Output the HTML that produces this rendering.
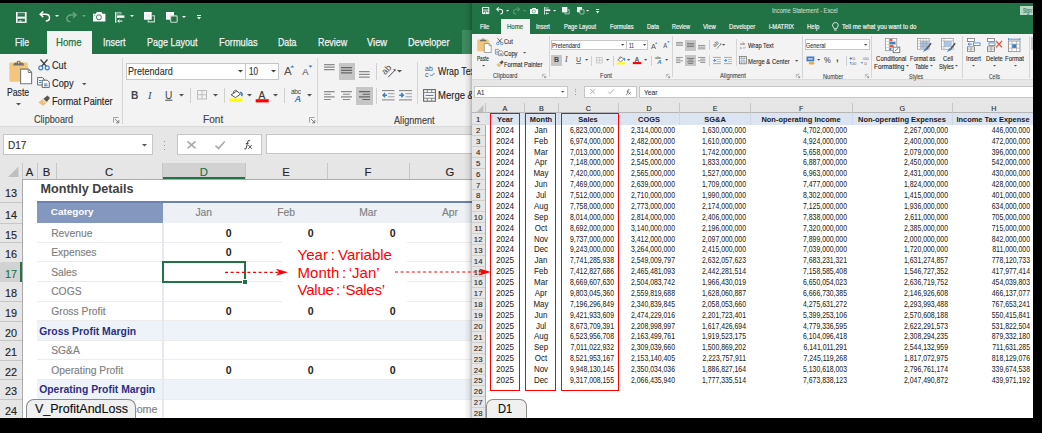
<!DOCTYPE html><html><head><meta charset="utf-8"><style>
*{margin:0;padding:0;box-sizing:border-box}
html,body{width:1042px;height:433px;overflow:hidden;background:#000}
body{position:relative;font-family:"Liberation Sans",sans-serif}
.a{position:absolute}
.t{position:absolute;white-space:nowrap;line-height:20px;height:20px}
svg{position:absolute;overflow:visible}
</style></head><body>
<div class="a" style="left:0px;top:3px;width:472px;height:51px;background:#217346;"></div>
<div class="a" style="left:0px;top:54px;width:472px;height:72px;background:#F3F3F3;"></div>
<div class="a" style="left:0px;top:126px;width:472px;height:1px;background:#DADADA;"></div>
<div class="a" style="left:0px;top:127px;width:472px;height:52px;background:#E6E6E6;"></div>
<svg style="left:16.4px;top:11.7px" width="10.60" height="10.90" viewBox="0 0 10.6 10.9" preserveAspectRatio="none"><rect x="0" y="0" width="1.6" height="10.9" fill="#fff"/><rect x="8.9" y="0" width="1.7" height="10.9" fill="#fff"/><rect x="1.6" y="0" width="7.3" height="1.2" fill="#fff" opacity="0.6"/><rect x="1.6" y="2.6" width="7.3" height="0.5" fill="#fff" opacity="0.25"/><rect x="1.6" y="4.6" width="7.3" height="2.1" fill="#fff"/><rect x="1.6" y="9.6" width="7.3" height="1.3" fill="#fff"/><rect x="3.5" y="8.3" width="1.9" height="1.3" fill="#fff"/></svg>
<svg style="left:38.9px;top:11.4px" width="11.50" height="10.50" viewBox="0 0 11.5 10.5" preserveAspectRatio="none"><path d="M1.5,3.3 H6.5 C9,3.3 10.5,5 10.5,6.8 C10.5,8.6 9,10 6.8,10" fill="none" stroke="#fff" stroke-width="1.5"/><path d="M4.3,0.5 L1.2,3.3 L4.3,6.1" fill="none" stroke="#fff" stroke-width="1.5"/></svg>
<svg style="left:54.6px;top:15.399999999999999px;" width="4" height="2.0" viewBox="0 0 4 2.0"><polygon points="0,0 4,0 2.0,2.0" fill="#fff"/></svg>
<svg style="left:66.1px;top:11.6px" width="11.30" height="10.10" viewBox="0 0 11.3 10.1" preserveAspectRatio="none"><path d="M9.8,3.1 H4.8 C2.3,3.1 0.8,4.8 0.8,6.6 C0.8,8.4 2.3,9.7 4.5,9.7" fill="none" stroke="#6AA583" stroke-width="1.5"/><path d="M7,0.4 L10.1,3.1 L7,5.8" fill="none" stroke="#6AA583" stroke-width="1.5"/></svg>
<svg style="left:81.8px;top:15.3px;" width="4" height="2.0" viewBox="0 0 4 2.0"><polygon points="0,0 4,0 2.0,2.0" fill="#6AA583"/></svg>
<svg style="left:93px;top:12.3px" width="12.40" height="9.40" viewBox="0 0 12.4 9.4" preserveAspectRatio="none"><path d="M0,1.7 H3 L3.8,0 H8.6 L9.4,1.7 H12.4 V9.4 H0 Z" fill="#fff"/><circle cx="5.9" cy="5.3" r="2.5" fill="none" stroke="#217346" stroke-width="0.9"/><circle cx="1.6" cy="3.2" r="0.45" fill="#217346"/></svg>
<svg style="left:115px;top:11.6px" width="9.40" height="10.80" viewBox="0 0 9.4 10.8" preserveAspectRatio="none"><rect x="0" y="0" width="1.4" height="10.8" fill="#fff" opacity="0.8"/><rect x="1.9" y="0.4" width="4.5" height="1.6" rx="0.6" fill="none" stroke="#fff" stroke-width="0.7" opacity="0.8"/><rect x="2" y="3.4" width="7.4" height="2.4" fill="#fff"/><path d="M7.5,9.1 H2.8 M4.5,7.6 L2.8,9.1 L4.5,10.6" fill="none" stroke="#fff" stroke-width="1"/></svg>
<svg style="left:130.3px;top:15.3px;" width="4" height="2.0" viewBox="0 0 4 2.0"><polygon points="0,0 4,0 2.0,2.0" fill="#fff"/></svg>
<svg style="left:143.8px;top:11.8px" width="11.10" height="10.60" viewBox="0 0 11.1 10.6" preserveAspectRatio="none"><rect x="0.7" y="0.7" width="6.3" height="6.3" fill="#EEEEEE" stroke="#fff" stroke-width="1.4"/><path d="M8.2,3.8 H10.4 V9.9 H4.2 V7.9" fill="none" stroke="#C9DCCF" stroke-width="1.1"/></svg>
<svg style="left:166.2px;top:11.8px" width="11.80" height="10.80" viewBox="0 0 11.8 10.8" preserveAspectRatio="none"><rect x="0" y="0" width="8" height="7.7" fill="#fff"/><rect x="1.3" y="1.3" width="5" height="5" fill="#F3F3F3"/><rect x="4.6" y="3.9" width="6.6" height="6.3" rx="1" fill="#217346" stroke="#C9DCCF" stroke-width="1.1"/></svg>
<svg style="left:182.0px;top:15.5px;" width="4" height="2.0" viewBox="0 0 4 2.0"><polygon points="0,0 4,0 2.0,2.0" fill="#fff"/></svg>
<svg style="left:197px;top:15px" width="4.00" height="4.50" viewBox="0 0 4 4.3" preserveAspectRatio="none"><rect x="0" y="0" width="4" height="0.9" fill="#fff"/><polygon points="0,1.9 4,1.9 2,4.3" fill="#fff"/></svg>
<div class="a" style="left:47px;top:30.6px;width:45.3px;height:23.4px;background:#F3F3F3;"></div>
<div class="a" style="left:462.3px;top:30px;width:9.7px;height:24px;background:#3E8A5F;"></div>
<div class="t" style="left:14.5px;top:32.30px;font-size:11.2px;color:#F2F2F2;font-weight:400;transform:scaleX(0.7813);transform-origin:left center;-webkit-text-stroke:0.25px #F2F2F2;">File</div>
<div class="t" style="left:55.9px;top:32.30px;font-size:11.2px;color:#217346;font-weight:400;transform:scaleX(0.8569);transform-origin:left center;-webkit-text-stroke:0.25px #217346;">Home</div>
<div class="t" style="left:102.5px;top:32.30px;font-size:11.2px;color:#F2F2F2;font-weight:400;transform:scaleX(0.8033);transform-origin:left center;-webkit-text-stroke:0.25px #F2F2F2;">Insert</div>
<div class="t" style="left:146.5px;top:32.30px;font-size:11.2px;color:#F2F2F2;font-weight:400;transform:scaleX(0.803);transform-origin:left center;-webkit-text-stroke:0.25px #F2F2F2;">Page Layout</div>
<div class="t" style="left:218.5px;top:32.30px;font-size:11.2px;color:#F2F2F2;font-weight:400;transform:scaleX(0.827);transform-origin:left center;-webkit-text-stroke:0.25px #F2F2F2;">Formulas</div>
<div class="t" style="left:278.0px;top:32.30px;font-size:11.2px;color:#F2F2F2;font-weight:400;transform:scaleX(0.782);transform-origin:left center;-webkit-text-stroke:0.25px #F2F2F2;">Data</div>
<div class="t" style="left:317.5px;top:32.30px;font-size:11.2px;color:#F2F2F2;font-weight:400;transform:scaleX(0.7952);transform-origin:left center;-webkit-text-stroke:0.25px #F2F2F2;">Review</div>
<div class="t" style="left:367.2px;top:32.30px;font-size:11.2px;color:#F2F2F2;font-weight:400;transform:scaleX(0.835);transform-origin:left center;-webkit-text-stroke:0.25px #F2F2F2;">View</div>
<div class="t" style="left:408.3px;top:32.30px;font-size:11.2px;color:#F2F2F2;font-weight:400;transform:scaleX(0.813);transform-origin:left center;-webkit-text-stroke:0.25px #F2F2F2;">Developer</div>
<svg style="left:9px;top:60px" width="24.00" height="25.00" viewBox="0 0 24 25" preserveAspectRatio="none"><rect x="0.4" y="2.6" width="18.3" height="19.1" rx="1.2" fill="#F0C77C"/><path d="M4.2,5.4 L5.2,2.8 H7.6 C7.6,0.2 11.8,0.2 11.8,2.8 H14.2 L15.2,5.4 Z" fill="#707070"/><circle cx="9.7" cy="2.5" r="0.9" fill="#F0C77C"/><path d="M11.6,9.1 H19.4 L22.6,12.3 V23.8 H11.6 Z" fill="#fff" stroke="#7A7A7A" stroke-width="1.1"/><path d="M19.2,9.1 V12.5 H22.6" fill="none" stroke="#7A7A7A" stroke-width="1"/></svg>
<div class="t" style="left:7.3px;top:83.10px;font-size:10.2px;color:#262626;font-weight:400;transform:scaleX(0.8512);transform-origin:left center;-webkit-text-stroke:0.139px #262626;">Paste</div>
<svg style="left:16.0px;top:102.95px;" width="5" height="2.5" viewBox="0 0 5 2.5"><polygon points="0,0 5,0 2.5,2.5" fill="#555"/></svg>
<svg style="left:38px;top:59.3px" width="12.00" height="11.50" viewBox="0 0 12 11.5" preserveAspectRatio="none"><path d="M2.5,0.5 L8.5,7.5 M9.5,0.5 L3.5,7.5" stroke="#444" stroke-width="1.3"/><circle cx="2.8" cy="8.8" r="2" fill="none" stroke="#3C7FC4" stroke-width="1.2"/><circle cx="9.2" cy="8.8" r="2" fill="none" stroke="#3C7FC4" stroke-width="1.2"/></svg>
<div class="t" style="left:52.2px;top:56.30px;font-size:10.4px;color:#262626;font-weight:400;transform:scaleX(0.8774);transform-origin:left center;-webkit-text-stroke:0.142px #262626;">Cut</div>
<svg style="left:37px;top:77.3px" width="13.00" height="11.00" viewBox="0 0 13 11" preserveAspectRatio="none"><path d="M0.6,0.6 H5.5 L7,2 V8 H0.6 Z" fill="#fff" stroke="#666" stroke-width="1"/><path d="M5.2,3.2 H10.3 L12.3,5.2 V10.4 H5.2 Z" fill="#fff" stroke="#666" stroke-width="1"/><rect x="2" y="3" width="2.5" height="1" fill="#3C7FC4"/><rect x="2" y="5" width="2.5" height="1" fill="#3C7FC4"/><rect x="7" y="6.5" width="3.5" height="1" fill="#3C7FC4"/><rect x="7" y="8.2" width="3.5" height="1" fill="#3C7FC4"/></svg>
<div class="t" style="left:52.2px;top:74.10px;font-size:10.4px;color:#262626;font-weight:400;transform:scaleX(0.8897);transform-origin:left center;-webkit-text-stroke:0.142px #262626;">Copy</div>
<svg style="left:81.75px;top:82.875px;" width="4.5" height="2.25" viewBox="0 0 4.5 2.25"><polygon points="0,0 4.5,0 2.25,2.25" fill="#555"/></svg>
<svg style="left:38px;top:95px" width="12.50" height="11.50" viewBox="0 0 12.5 11.5" preserveAspectRatio="none"><path d="M0.5,7.5 L5,3.5 L9,7.5 L5,11 Z" fill="#EBC17F"/><path d="M5.5,3.8 L9.5,0.5 L12,3 L8.8,7" fill="#555"/><path d="M4.5,4.3 L8.6,8.1" stroke="#fff" stroke-width="0.8"/></svg>
<div class="t" style="left:52.2px;top:92.10px;font-size:10.4px;color:#262626;font-weight:400;transform:scaleX(0.8812);transform-origin:left center;-webkit-text-stroke:0.142px #262626;">Format Painter</div>
<div class="t" style="left:34.3px;top:110.40px;font-size:10.4px;color:#444444;font-weight:400;transform:scaleX(0.8784);transform-origin:left center;-webkit-text-stroke:0.142px #444444;">Clipboard</div>
<svg style="left:113px;top:117px" width="6.50" height="6.50" viewBox="0 0 6.5 6.5" preserveAspectRatio="none"><path d="M0.5,5.5 V0.5 H5.5" fill="none" stroke="#999" stroke-width="0.9"/><path d="M2,2 L5.8,5.8 M3,5.8 H5.8 V3" fill="none" stroke="#777" stroke-width="0.9"/></svg>
<div class="a" style="left:122.3px;top:58px;width:1px;height:66px;background:#D5D5D5;"></div>
<div class="a" style="left:125.8px;top:62.6px;width:119.9px;height:17.7px;background:#fff;border:1px solid #C6C6C6;"></div>
<div class="a" style="left:245.2px;top:62.6px;width:34.2px;height:17.7px;background:#fff;border:1px solid #C6C6C6;"></div>
<div class="t" style="left:128.1px;top:62.30px;font-size:10px;color:#333;font-weight:400;transform:scaleX(0.9035);transform-origin:left center;-webkit-text-stroke:0.136px #333;">Pretendard</div>
<svg style="left:237.7px;top:70.05px;" width="5" height="2.5" viewBox="0 0 5 2.5"><polygon points="0,0 5,0 2.5,2.5" fill="#444"/></svg>
<div class="t" style="left:248.5px;top:62.40px;font-size:10.2px;color:#333;font-weight:400;transform:scaleX(0.7933);transform-origin:left center;-webkit-text-stroke:0.139px #333;">10</div>
<svg style="left:271.4px;top:70.05px;" width="5" height="2.5" viewBox="0 0 5 2.5"><polygon points="0,0 5,0 2.5,2.5" fill="#444"/></svg>
<svg style="left:284.3px;top:65.2px" width="11.00" height="10.00" viewBox="0 0 11 10" preserveAspectRatio="none"><text x="0" y="9.5" font-family="Liberation Sans" font-size="11.5" fill="#505050">A</text><polygon points="6.3,2.6 10.3,2.6 8.3,0.3" fill="#3C7FC4"/></svg>
<svg style="left:301.6px;top:65.2px" width="11.00" height="10.50" viewBox="0 0 11 10.5" preserveAspectRatio="none"><text x="0.3" y="10" font-family="Liberation Sans" font-size="9.5" fill="#505050">A</text><polygon points="6.5,0.5 10.5,0.5 8.5,2.8" fill="#3C7FC4"/></svg>
<svg style="left:130.6px;top:91.2px" width="7.00" height="8.00" viewBox="0 0 7 8" preserveAspectRatio="none"><text x="0" y="7.5" font-family="Liberation Sans" font-size="10.2" font-weight="700" fill="#444">B</text></svg>
<svg style="left:148.4px;top:91.2px" width="6.00" height="8.00" viewBox="0 0 6 8" preserveAspectRatio="none"><text x="0" y="7.5" font-family="Liberation Serif" font-size="10.5" font-style="italic" fill="#444">I</text></svg>
<svg style="left:164.6px;top:91px" width="8.00" height="10.00" viewBox="0 0 8 10" preserveAspectRatio="none"><text x="0" y="7.5" font-family="Liberation Sans" font-size="10.2" fill="#444">U</text><rect x="0.2" y="8.7" width="7.2" height="1" fill="#444"/></svg>
<svg style="left:179.1px;top:93.85px;" width="5" height="2.5" viewBox="0 0 5 2.5"><polygon points="0,0 5,0 2.5,2.5" fill="#555"/></svg>
<div class="a" style="left:190.3px;top:88px;width:1px;height:15px;background:#D0D0D0;"></div>
<svg style="left:197.3px;top:90.3px" width="10.00" height="9.50" viewBox="0 0 10 9.5" preserveAspectRatio="none"><rect x="0.5" y="0.5" width="9" height="8.5" fill="none" stroke="#BDBDBD" stroke-width="1"/><path d="M5,0.5 V9 M0.5,4.75 H9.5" stroke="#BDBDBD" stroke-width="1"/></svg>
<svg style="left:212.8px;top:93.85px;" width="5" height="2.5" viewBox="0 0 5 2.5"><polygon points="0,0 5,0 2.5,2.5" fill="#555"/></svg>
<div class="a" style="left:223.8px;top:88px;width:1px;height:15px;background:#D0D0D0;"></div>
<svg style="left:230px;top:89px" width="13.50" height="13.00" viewBox="0 0 13.5 13" preserveAspectRatio="none"><path d="M1.1,5.8 L6.8,2.1 L10.5,5 L5.6,8.6 Z" fill="#fff" stroke="#555" stroke-width="1"/><path d="M3.4,4.3 C3,1 6.6,0.2 7.4,3" fill="none" stroke="#555" stroke-width="0.9"/><path d="M10.2,3.2 C12.2,3.6 12.6,5.6 11.6,7.2" fill="none" stroke="#3C7FC4" stroke-width="1.6"/><rect x="-0.5" y="9.5" width="13" height="3.2" fill="#FFFF00"/></svg>
<svg style="left:246.5px;top:93.85px;" width="5" height="2.5" viewBox="0 0 5 2.5"><polygon points="0,0 5,0 2.5,2.5" fill="#555"/></svg>
<svg style="left:256.3px;top:89.5px" width="13.00" height="12.50" viewBox="0 0 13 12.5" preserveAspectRatio="none"><text x="2.6" y="8.6" font-family="Liberation Sans" font-size="10" fill="#3A3A3A" stroke="#3A3A3A" stroke-width="0.2">A</text><rect x="-0.3" y="9.2" width="13" height="3.2" fill="#FF0000"/></svg>
<svg style="left:272.7px;top:93.85px;" width="5" height="2.5" viewBox="0 0 5 2.5"><polygon points="0,0 5,0 2.5,2.5" fill="#555"/></svg>
<div class="a" style="left:284px;top:88px;width:1px;height:15px;background:#D0D0D0;"></div>
<svg style="left:290.5px;top:89px" width="12.00" height="13.00" viewBox="0 0 12 13" preserveAspectRatio="none"><text x="0" y="5.3" font-family="Liberation Sans" font-size="6.6" fill="#444" letter-spacing="-0.3">abc</text><text x="3.6" y="12.7" font-family="Liberation Sans" font-size="9.2" font-weight="700" font-style="italic" fill="#3C7FC4">A</text></svg>
<svg style="left:306.7px;top:93.85px;" width="5" height="2.5" viewBox="0 0 5 2.5"><polygon points="0,0 5,0 2.5,2.5" fill="#555"/></svg>
<div class="t" style="left:203.0px;top:110.30px;font-size:10.4px;color:#444444;font-weight:400;transform:scaleX(0.9708);transform-origin:left center;-webkit-text-stroke:0.142px #444444;">Font</div>
<svg style="left:308.6px;top:117px" width="6.50" height="6.50" viewBox="0 0 6.5 6.5" preserveAspectRatio="none"><path d="M0.5,5.5 V0.5 H5.5" fill="none" stroke="#999" stroke-width="0.9"/><path d="M2,2 L5.8,5.8 M3,5.8 H5.8 V3" fill="none" stroke="#777" stroke-width="0.9"/></svg>
<div class="a" style="left:317.3px;top:58px;width:1px;height:66px;background:#D5D5D5;"></div>
<svg style="left:324.4px;top:64.2px" width="10.60" height="6.30" viewBox="0 0 11 6" preserveAspectRatio="none"><path d="M0,0.65 H11 M0,3 H11 M0,5.35 H11" stroke="#8A8A8A" stroke-width="1.1"/></svg>
<div class="a" style="left:338.5px;top:62.6px;width:16.9px;height:17.4px;background:#C6C6C6;"></div>
<svg style="left:341.3px;top:67.3px" width="11.10" height="6.70" viewBox="0 0 11 6" preserveAspectRatio="none"><path d="M0,0.65 H11 M0,3 H11 M0,5.35 H11" stroke="#666" stroke-width="1.1"/></svg>
<svg style="left:359px;top:71.1px" width="10.70" height="6.80" viewBox="0 0 11 6" preserveAspectRatio="none"><path d="M0,0.65 H11 M0,3 H11 M0,5.35 H11" stroke="#8A8A8A" stroke-width="1.1"/></svg>
<div class="a" style="left:376.3px;top:63.4px;width:1px;height:16.2px;background:#D0D0D0;"></div>
<svg style="left:381.5px;top:64.5px" width="14.50" height="13.00" viewBox="0 0 14.5 13" preserveAspectRatio="none"><text x="4.3" y="7.6" text-anchor="middle" font-family="Liberation Sans" font-size="9" fill="#505050" transform="rotate(-45 4.3 4.6)">ab</text><path d="M6.2,12.2 L12.8,5.4" stroke="#505050" stroke-width="1"/><polygon points="11,4.4 13.7,3.9 13.2,6.6" fill="#505050"/></svg>
<svg style="left:397.3px;top:70.05px;" width="5" height="2.5" viewBox="0 0 5 2.5"><polygon points="0,0 5,0 2.5,2.5" fill="#555"/></svg>
<svg style="left:324.4px;top:90.5px" width="10.60" height="8.90" viewBox="0 0 11 8.5" preserveAspectRatio="none"><path d="M0,0.65 H11 M0,3.1 H7 M0,5.6 H11 M0,8.1 H7" stroke="#8A8A8A" stroke-width="1.1"/></svg>
<svg style="left:341.3px;top:90.5px" width="11.00" height="8.90" viewBox="0 0 11 8.5" preserveAspectRatio="none"><path d="M0,0.65 H11 M2,3.1 H9 M0,5.6 H11 M2,8.1 H9" stroke="#8A8A8A" stroke-width="1.1"/></svg>
<div class="a" style="left:355.9px;top:87px;width:17px;height:17.6px;background:#C6C6C6;"></div>
<svg style="left:359.2px;top:90.8px" width="11.00" height="8.90" viewBox="0 0 11 8.5" preserveAspectRatio="none"><path d="M0,0.65 H11 M3.5,3.1 H11 M0,5.6 H11 M3.5,8.1 H11" stroke="#666" stroke-width="1.1"/></svg>
<div class="a" style="left:376.3px;top:87.5px;width:1px;height:16.5px;background:#D0D0D0;"></div>
<svg style="left:382.2px;top:89.8px" width="12.50" height="10.50" viewBox="0 0 12.5 10.5" preserveAspectRatio="none"><path d="M0,0.6 H12.5 M0,9.9 H12.5" stroke="#808080" stroke-width="1"/><path d="M6,3.7 H12.5 M6,6.8 H12.5" stroke="#A0A0A0" stroke-width="1"/><path d="M5,5.2 H1 M3.1,3.1 L1,5.2 L3.1,7.3" fill="none" stroke="#3C7FC4" stroke-width="1.4"/></svg>
<svg style="left:398.8px;top:89.8px" width="13.00" height="10.50" viewBox="0 0 13 10.5" preserveAspectRatio="none"><path d="M0,0.6 H13 M0,9.9 H13" stroke="#808080" stroke-width="1"/><path d="M6.5,3.7 H13 M6.5,6.8 H13" stroke="#A0A0A0" stroke-width="1"/><path d="M0.2,5.2 H4.4 M2.3,3.1 L4.4,5.2 L2.3,7.3" fill="none" stroke="#3C7FC4" stroke-width="1.4"/></svg>
<div class="a" style="left:417.3px;top:62px;width:1px;height:42px;background:#D5D5D5;"></div>
<svg style="left:425px;top:64.8px" width="11.00" height="12.00" viewBox="0 0 11 12" preserveAspectRatio="none"><text x="0" y="5.5" font-family="Liberation Sans" font-size="7" fill="#555">ab</text><text x="0" y="11.5" font-family="Liberation Sans" font-size="7" fill="#555">c</text><path d="M5,9.5 L6.5,11 L9.5,8" fill="none" stroke="#3C7FC4" stroke-width="1"/></svg>
<div class="t" style="left:437.6px;top:61.40px;font-size:11.2px;color:#262626;font-weight:400;transform:scaleX(0.7895);transform-origin:left center;-webkit-text-stroke:0.15px #262626;">Wrap Text</div>
<svg style="left:423px;top:88.5px" width="13.00" height="12.80" viewBox="0 0 13 12.8" preserveAspectRatio="none"><rect x="0.6" y="0.6" width="11.8" height="11.6" fill="#fff" stroke="#666" stroke-width="1.1"/><path d="M0.6,3.6 H12.4 M0.6,9.2 H12.4 M4.3,0.6 V3.6 M8.7,0.6 V3.6 M4.3,9.2 V12.2 M8.7,9.2 V12.2" stroke="#777" stroke-width="0.9"/><path d="M2.5,6.4 H10.5" stroke="#3C7FC4" stroke-width="1.1"/></svg>
<div class="t" style="left:437.6px;top:85.40px;font-size:11.2px;color:#262626;font-weight:400;transform:scaleX(0.8506);transform-origin:left center;-webkit-text-stroke:0.15px #262626;">Merge &amp; Center</div>
<div class="t" style="left:393.8px;top:110.50px;font-size:10.4px;color:#444444;font-weight:400;transform:scaleX(0.8801);transform-origin:left center;-webkit-text-stroke:0.142px #444444;">Alignment</div>
<div class="a" style="left:3px;top:134px;width:150px;height:21px;background:#fff;border:1px solid #C6C6C6;"></div>
<div class="a" style="left:177px;top:134px;width:85px;height:21px;background:#fff;border:1px solid #C6C6C6;"></div>
<div class="a" style="left:265.5px;top:134.4px;width:210px;height:20px;background:#fff;border:1px solid #C6C6C6;"></div>
<div class="t" style="left:8.25px;top:136.10px;font-size:10.4px;color:#333;font-weight:400;transform:scaleX(0.9671);transform-origin:left center;-webkit-text-stroke:0.142px #333;">D17</div>
<svg style="left:142.1px;top:143.75px;" width="5" height="2.5" viewBox="0 0 5 2.5"><polygon points="0,0 5,0 2.5,2.5" fill="#555"/></svg>
<div class="a" style="left:164.2px;top:140.5px;width:1.3px;height:1.3px;background:#999;"></div>
<div class="a" style="left:164.2px;top:144.5px;width:1.3px;height:1.3px;background:#999;"></div>
<div class="a" style="left:164.2px;top:148.5px;width:1.3px;height:1.3px;background:#999;"></div>
<svg style="left:186.9px;top:140.9px" width="9.00" height="7.80" viewBox="0 0 9 7.8" preserveAspectRatio="none"><path d="M0.5,0.4 L8.5,7.4 M8.5,0.4 L0.5,7.4" stroke="#A6A6A6" stroke-width="1.4"/></svg>
<svg style="left:214.7px;top:140.9px" width="10.20" height="8.20" viewBox="0 0 10.2 8.2" preserveAspectRatio="none"><path d="M0.5,4.6 L3.6,7.6 L9.7,0.5" fill="none" stroke="#A6A6A6" stroke-width="1.5"/></svg>
<svg style="left:242.8px;top:139.7px" width="9.40" height="9.40" viewBox="0 0 9.4 9.4" preserveAspectRatio="none"><path d="M7.2,0.9 C6.3,0.2 5.2,0.4 4.8,1.6 L3.4,7.6 C3,9 2.2,9.2 1.2,8.6 M2.8,3.6 H5.6" fill="none" stroke="#505050" stroke-width="1.05"/><path d="M5.4,5 L8.8,8.8 M8.8,5 L5.4,8.8" stroke="#505050" stroke-width="1"/></svg>
<div class="a" style="left:0px;top:179px;width:472px;height:239px;background:#fff;"></div>
<div class="a" style="left:0px;top:163px;width:472px;height:16px;background:#E6E6E6;"></div>
<div class="a" style="left:0px;top:178.5px;width:472px;height:1px;background:#ABABAB;"></div>
<div class="a" style="left:162.5px;top:163px;width:82.5px;height:16px;background:#D2D2D2;"></div>
<div class="a" style="left:162.5px;top:177px;width:82.5px;height:2px;background:#217346;"></div>
<div class="a" style="left:22px;top:163px;width:1px;height:16px;background:#C6C6C6;"></div>
<div class="a" style="left:37px;top:163px;width:1px;height:16px;background:#C6C6C6;"></div>
<div class="a" style="left:56px;top:163px;width:1px;height:16px;background:#C6C6C6;"></div>
<div class="a" style="left:245px;top:163px;width:1px;height:16px;background:#C6C6C6;"></div>
<div class="a" style="left:327px;top:163px;width:1px;height:16px;background:#C6C6C6;"></div>
<div class="a" style="left:409px;top:163px;width:1px;height:16px;background:#C6C6C6;"></div>
<div class="a" style="left:162px;top:163px;width:1px;height:16px;background:#C6C6C6;"></div>
<svg style="left:0;top:163px" width="22" height="16"><polygon points="18.5,3.5 18.5,14 8,14" fill="#BFBFBF"/></svg>
<div class="t" style="left:-270.5px;width:600px;text-align:center;top:162.40px;font-size:11.3px;color:#262626;font-weight:400;-webkit-text-stroke:0.15px #262626;">A</div>
<div class="t" style="left:-253.5px;width:600px;text-align:center;top:162.40px;font-size:11.3px;color:#262626;font-weight:400;-webkit-text-stroke:0.15px #262626;">B</div>
<div class="t" style="left:-191px;width:600px;text-align:center;top:162.40px;font-size:11.3px;color:#262626;font-weight:400;-webkit-text-stroke:0.15px #262626;">C</div>
<div class="t" style="left:-96.25px;width:600px;text-align:center;top:162.40px;font-size:11.3px;color:#217346;font-weight:400;-webkit-text-stroke:0.15px #217346;">D</div>
<div class="t" style="left:-14px;width:600px;text-align:center;top:162.40px;font-size:11.3px;color:#262626;font-weight:400;-webkit-text-stroke:0.15px #262626;">E</div>
<div class="t" style="left:68px;width:600px;text-align:center;top:162.40px;font-size:11.3px;color:#262626;font-weight:400;-webkit-text-stroke:0.15px #262626;">F</div>
<div class="t" style="left:150px;width:600px;text-align:center;top:162.40px;font-size:11.3px;color:#262626;font-weight:400;-webkit-text-stroke:0.15px #262626;">G</div>
<div class="a" style="left:0px;top:179px;width:22px;height:239px;background:#E6E6E6;"></div>
<div class="a" style="left:21.5px;top:179px;width:1px;height:239px;background:#ABABAB;"></div>
<div class="a" style="left:0px;top:202.0px;width:22px;height:1px;background:#C6C6C6;"></div>
<div class="t" style="left:-289.3px;width:600px;text-align:center;top:182.55px;font-size:11.2px;color:#262626;font-weight:400;transform:scaleX(0.97);transform-origin:center center;-webkit-text-stroke:0.15px #262626;">13</div>
<div class="a" style="left:0px;top:222.5px;width:22px;height:1px;background:#C6C6C6;"></div>
<div class="t" style="left:-289.3px;width:600px;text-align:center;top:204.55px;font-size:11.2px;color:#262626;font-weight:400;transform:scaleX(0.97);transform-origin:center center;-webkit-text-stroke:0.15px #262626;">14</div>
<div class="a" style="left:0px;top:242.1px;width:22px;height:1px;background:#C6C6C6;"></div>
<div class="t" style="left:-289.3px;width:600px;text-align:center;top:224.60px;font-size:11.2px;color:#262626;font-weight:400;transform:scaleX(0.97);transform-origin:center center;-webkit-text-stroke:0.15px #262626;">15</div>
<div class="a" style="left:0px;top:261.7px;width:22px;height:1px;background:#C6C6C6;"></div>
<div class="t" style="left:-289.3px;width:600px;text-align:center;top:244.20px;font-size:11.2px;color:#262626;font-weight:400;transform:scaleX(0.97);transform-origin:center center;-webkit-text-stroke:0.15px #262626;">16</div>
<div class="a" style="left:0px;top:281.3px;width:22px;height:1px;background:#C6C6C6;"></div>
<div class="a" style="left:0px;top:262.2px;width:21.5px;height:19.600000000000023px;background:#D2D2D2;"></div>
<div class="a" style="left:19.5px;top:262.2px;width:2px;height:19.600000000000023px;background:#217346;"></div>
<div class="t" style="left:-289.3px;width:600px;text-align:center;top:263.80px;font-size:11.2px;color:#217346;font-weight:400;transform:scaleX(0.97);transform-origin:center center;-webkit-text-stroke:0.15px #217346;">17</div>
<div class="a" style="left:0px;top:300.90000000000003px;width:22px;height:1px;background:#C6C6C6;"></div>
<div class="t" style="left:-289.3px;width:600px;text-align:center;top:283.40px;font-size:11.2px;color:#262626;font-weight:400;transform:scaleX(0.97);transform-origin:center center;-webkit-text-stroke:0.15px #262626;">18</div>
<div class="a" style="left:0px;top:320.50000000000006px;width:22px;height:1px;background:#C6C6C6;"></div>
<div class="t" style="left:-289.3px;width:600px;text-align:center;top:303.00px;font-size:11.2px;color:#262626;font-weight:400;transform:scaleX(0.97);transform-origin:center center;-webkit-text-stroke:0.15px #262626;">19</div>
<div class="a" style="left:0px;top:340.1000000000001px;width:22px;height:1px;background:#C6C6C6;"></div>
<div class="t" style="left:-289.3px;width:600px;text-align:center;top:322.60px;font-size:11.2px;color:#262626;font-weight:400;transform:scaleX(0.97);transform-origin:center center;-webkit-text-stroke:0.15px #262626;">20</div>
<div class="a" style="left:0px;top:359.7000000000001px;width:22px;height:1px;background:#C6C6C6;"></div>
<div class="t" style="left:-289.3px;width:600px;text-align:center;top:342.20px;font-size:11.2px;color:#262626;font-weight:400;transform:scaleX(0.97);transform-origin:center center;-webkit-text-stroke:0.15px #262626;">21</div>
<div class="a" style="left:0px;top:379.3000000000001px;width:22px;height:1px;background:#C6C6C6;"></div>
<div class="t" style="left:-289.3px;width:600px;text-align:center;top:361.80px;font-size:11.2px;color:#262626;font-weight:400;transform:scaleX(0.97);transform-origin:center center;-webkit-text-stroke:0.15px #262626;">22</div>
<div class="a" style="left:0px;top:398.90000000000015px;width:22px;height:1px;background:#C6C6C6;"></div>
<div class="t" style="left:-289.3px;width:600px;text-align:center;top:381.40px;font-size:11.2px;color:#262626;font-weight:400;transform:scaleX(0.97);transform-origin:center center;-webkit-text-stroke:0.15px #262626;">23</div>
<div class="a" style="left:0px;top:418.50000000000017px;width:22px;height:1px;background:#C6C6C6;"></div>
<div class="t" style="left:-289.3px;width:600px;text-align:center;top:401.00px;font-size:11.2px;color:#262626;font-weight:400;transform:scaleX(0.97);transform-origin:center center;-webkit-text-stroke:0.15px #262626;">24</div>
<div class="t" style="left:40.5px;top:179.30px;font-size:12.6px;color:#404040;font-weight:700;">Monthly Details</div>
<div class="a" style="left:37px;top:201px;width:435px;height:1.8px;background:#6B82AE;"></div>
<div class="a" style="left:37px;top:202.5px;width:125.5px;height:20.5px;background:#8497BF;"></div>
<div class="a" style="left:162.5px;top:202.5px;width:309.5px;height:20.5px;background:#EDF1F6;"></div>
<div class="t" style="left:50.8px;top:202.00px;font-size:9.9px;color:#FFFFFF;font-weight:700;">Category</div>
<div class="t" style="left:-96.25px;width:600px;text-align:center;top:203.20px;font-size:10.3px;color:#808080;font-weight:400;-webkit-text-stroke:0.14px #808080;">Jan</div>
<div class="t" style="left:-14px;width:600px;text-align:center;top:203.20px;font-size:10.3px;color:#808080;font-weight:400;-webkit-text-stroke:0.14px #808080;">Feb</div>
<div class="t" style="left:68px;width:600px;text-align:center;top:203.20px;font-size:10.3px;color:#808080;font-weight:400;-webkit-text-stroke:0.14px #808080;">Mar</div>
<div class="t" style="left:150px;width:600px;text-align:center;top:203.20px;font-size:10.3px;color:#808080;font-weight:400;-webkit-text-stroke:0.14px #808080;">Apr</div>
<div class="a" style="left:37px;top:241.79999999999998px;width:435px;height:1px;background:#ECECEC;"></div>
<div class="t" style="left:51.2px;top:223.60px;font-size:10.3px;color:#808080;font-weight:400;-webkit-text-stroke:0.14px #808080;">Revenue</div>
<div class="t" style="left:-368.4px;width:600px;text-align:right;top:222.50px;font-size:10.6px;color:#262626;font-weight:700;">0</div>
<div class="t" style="left:-286.3px;width:600px;text-align:right;top:222.50px;font-size:10.6px;color:#262626;font-weight:700;">0</div>
<div class="t" style="left:-204.3px;width:600px;text-align:right;top:222.50px;font-size:10.6px;color:#262626;font-weight:700;">0</div>
<div class="a" style="left:37px;top:261.4px;width:435px;height:1px;background:#ECECEC;"></div>
<div class="t" style="left:51.2px;top:243.20px;font-size:10.3px;color:#808080;font-weight:400;-webkit-text-stroke:0.14px #808080;">Expenses</div>
<div class="t" style="left:-368.4px;width:600px;text-align:right;top:242.10px;font-size:10.6px;color:#262626;font-weight:700;">0</div>
<div class="a" style="left:37px;top:281.0px;width:435px;height:1px;background:#ECECEC;"></div>
<div class="t" style="left:51.2px;top:262.80px;font-size:10.3px;color:#808080;font-weight:400;-webkit-text-stroke:0.14px #808080;">Sales</div>
<div class="a" style="left:37px;top:300.6px;width:435px;height:1px;background:#ECECEC;"></div>
<div class="t" style="left:51.2px;top:282.40px;font-size:10.3px;color:#808080;font-weight:400;-webkit-text-stroke:0.14px #808080;">COGS</div>
<div class="a" style="left:37px;top:320.20000000000005px;width:435px;height:1px;background:#ECECEC;"></div>
<div class="t" style="left:51.2px;top:302.00px;font-size:10.3px;color:#808080;font-weight:400;-webkit-text-stroke:0.14px #808080;">Gross Profit</div>
<div class="t" style="left:-368.4px;width:600px;text-align:right;top:300.90px;font-size:10.6px;color:#262626;font-weight:700;">0</div>
<div class="t" style="left:-286.3px;width:600px;text-align:right;top:300.90px;font-size:10.6px;color:#262626;font-weight:700;">0</div>
<div class="t" style="left:-204.3px;width:600px;text-align:right;top:300.90px;font-size:10.6px;color:#262626;font-weight:700;">0</div>
<div class="a" style="left:37px;top:321.00000000000006px;width:435px;height:19.600000000000023px;background:#EEF3FA;"></div>
<div class="a" style="left:37px;top:339.80000000000007px;width:435px;height:1px;background:#ECECEC;"></div>
<div class="t" style="left:39.2px;top:321.60px;font-size:10.4px;color:#2C2F82;font-weight:700;">Gross Profit Margin</div>
<div class="a" style="left:37px;top:359.4000000000001px;width:435px;height:1px;background:#ECECEC;"></div>
<div class="t" style="left:51.2px;top:341.20px;font-size:10.3px;color:#808080;font-weight:400;-webkit-text-stroke:0.14px #808080;">SG&amp;A</div>
<div class="a" style="left:37px;top:379.0000000000001px;width:435px;height:1px;background:#ECECEC;"></div>
<div class="t" style="left:51.2px;top:360.80px;font-size:10.3px;color:#808080;font-weight:400;-webkit-text-stroke:0.14px #808080;">Operating Profit</div>
<div class="t" style="left:-368.4px;width:600px;text-align:right;top:359.70px;font-size:10.6px;color:#262626;font-weight:700;">0</div>
<div class="t" style="left:-286.3px;width:600px;text-align:right;top:359.70px;font-size:10.6px;color:#262626;font-weight:700;">0</div>
<div class="t" style="left:-204.3px;width:600px;text-align:right;top:359.70px;font-size:10.6px;color:#262626;font-weight:700;">0</div>
<div class="a" style="left:37px;top:379.8000000000001px;width:435px;height:19.600000000000023px;background:#EEF3FA;"></div>
<div class="a" style="left:37px;top:398.60000000000014px;width:435px;height:1px;background:#ECECEC;"></div>
<div class="t" style="left:39.2px;top:380.40px;font-size:10.4px;color:#2C2F82;font-weight:700;">Operating Profit Margin</div>
<div class="a" style="left:37px;top:418.20000000000016px;width:435px;height:1px;background:#ECECEC;"></div>
<div class="t" style="left:50.7px;top:400.00px;font-size:10.3px;color:#808080;font-weight:400;transform:scaleX(1.0461);transform-origin:left center;-webkit-text-stroke:0.14px #808080;">Non-operating Income</div>
<div class="a" style="left:162.4px;top:223px;width:1.3px;height:195px;background:#E8E8F3;"></div>
<div class="a" style="left:162px;top:261.3px;width:84.3px;height:21.3px;border:2.2px solid #217346;"></div>
<div class="a" style="left:241.8px;top:279.2px;width:6.2px;height:5.8px;background:#217346;border:1px solid #fff;"></div>
<div class="a" style="left:282px;top:238px;width:125px;height:66px;background:#FFFFFF;"></div>
<div class="t" style="left:297.6px;top:245.40px;font-size:15px;color:#FF0000;font-weight:400;word-spacing:-1.2px">Year : Variable</div>
<div class="t" style="left:297.6px;top:262.70px;font-size:15px;color:#FF0000;font-weight:400;word-spacing:-1.5px">Month : ‘Jan’</div>
<div class="t" style="left:297.6px;top:280.30px;font-size:15px;color:#FF0000;font-weight:400;word-spacing:-1.5px;letter-spacing:-0.25px">Value : ‘Sales’</div>
<div class="a" style="left:472px;top:3px;width:561px;height:31px;background:#217346;"></div>
<div class="a" style="left:472px;top:34px;width:561px;height:45px;background:#F3F3F3;"></div>
<div class="a" style="left:472px;top:79px;width:561px;height:1px;background:#DADADA;"></div>
<div class="a" style="left:472px;top:80px;width:561px;height:33px;background:#E6E6E6;"></div>
<div class="a" style="left:474px;top:86px;width:94px;height:12px;background:#fff;border:1px solid #C6C6C6;"></div>
<div class="a" style="left:584px;top:86px;width:53px;height:12px;background:#fff;border:1px solid #C6C6C6;"></div>
<div class="a" style="left:639px;top:86px;width:400px;height:12px;background:#fff;border:1px solid #C6C6C6;"></div>
<div class="a" style="left:472px;top:113px;width:561px;height:305px;background:#fff;"></div>
<div class="a" style="left:472px;top:103px;width:561px;height:10.2px;background:#E6E6E6;"></div>
<div class="a" style="left:472px;top:112.4px;width:561px;height:1px;background:#B5B5B5;"></div>
<div class="a" style="left:484.8px;top:103px;width:0.8px;height:10.2px;background:#C6C6C6;"></div>
<div class="a" style="left:523.9px;top:103px;width:0.8px;height:10.2px;background:#C6C6C6;"></div>
<div class="a" style="left:557.9px;top:103px;width:0.8px;height:10.2px;background:#C6C6C6;"></div>
<div class="a" style="left:618.0px;top:103px;width:0.8px;height:10.2px;background:#C6C6C6;"></div>
<div class="a" style="left:679.2px;top:103px;width:0.8px;height:10.2px;background:#C6C6C6;"></div>
<div class="a" style="left:749.9px;top:103px;width:0.8px;height:10.2px;background:#C6C6C6;"></div>
<div class="a" style="left:851.5px;top:103px;width:0.8px;height:10.2px;background:#C6C6C6;"></div>
<div class="a" style="left:952.0px;top:103px;width:0.8px;height:10.2px;background:#C6C6C6;"></div>
<svg style="left:471px;top:103px" width="15" height="10"><polygon points="12.5,2 12.5,9 5.5,9" fill="#BFBFBF"/></svg>
<div class="t" style="left:204.85000000000002px;width:600px;text-align:center;top:99.20px;font-size:7.2px;color:#262626;font-weight:400;-webkit-text-stroke:0.098px #262626;">A</div>
<div class="t" style="left:241.39999999999998px;width:600px;text-align:center;top:99.20px;font-size:7.2px;color:#262626;font-weight:400;-webkit-text-stroke:0.098px #262626;">B</div>
<div class="t" style="left:288.45000000000005px;width:600px;text-align:center;top:99.20px;font-size:7.2px;color:#262626;font-weight:400;-webkit-text-stroke:0.098px #262626;">C</div>
<div class="t" style="left:349.1px;width:600px;text-align:center;top:99.20px;font-size:7.2px;color:#262626;font-weight:400;-webkit-text-stroke:0.098px #262626;">D</div>
<div class="t" style="left:415.04999999999995px;width:600px;text-align:center;top:99.20px;font-size:7.2px;color:#262626;font-weight:400;-webkit-text-stroke:0.098px #262626;">E</div>
<div class="t" style="left:501.20000000000005px;width:600px;text-align:center;top:99.20px;font-size:7.2px;color:#262626;font-weight:400;-webkit-text-stroke:0.098px #262626;">F</div>
<div class="t" style="left:602.25px;width:600px;text-align:center;top:99.20px;font-size:7.2px;color:#262626;font-weight:400;-webkit-text-stroke:0.098px #262626;">G</div>
<div class="t" style="left:693.75px;width:600px;text-align:center;top:99.20px;font-size:7.2px;color:#262626;font-weight:400;-webkit-text-stroke:0.098px #262626;">H</div>
<div class="a" style="left:472px;top:113.2px;width:13.3px;height:305px;background:#E6E6E6;"></div>
<div class="a" style="left:484.8px;top:113.2px;width:0.8px;height:305px;background:#ABABAB;"></div>
<div class="a" style="left:472px;top:124.1px;width:13.3px;height:0.8px;background:#CFCFCF;"></div>
<div class="t" style="left:178.2px;width:600px;text-align:center;top:110.00px;font-size:7.8px;color:#262626;font-weight:400;-webkit-text-stroke:0.106px #262626;">1</div>
<div class="a" style="left:472px;top:134.98px;width:13.3px;height:0.8px;background:#CFCFCF;"></div>
<div class="t" style="left:178.2px;width:600px;text-align:center;top:121.14px;font-size:7.8px;color:#262626;font-weight:400;-webkit-text-stroke:0.106px #262626;">2</div>
<div class="a" style="left:472px;top:145.85999999999999px;width:13.3px;height:0.8px;background:#CFCFCF;"></div>
<div class="t" style="left:178.2px;width:600px;text-align:center;top:132.02px;font-size:7.8px;color:#262626;font-weight:400;-webkit-text-stroke:0.106px #262626;">3</div>
<div class="a" style="left:472px;top:156.74px;width:13.3px;height:0.8px;background:#CFCFCF;"></div>
<div class="t" style="left:178.2px;width:600px;text-align:center;top:142.90px;font-size:7.8px;color:#262626;font-weight:400;-webkit-text-stroke:0.106px #262626;">4</div>
<div class="a" style="left:472px;top:167.62px;width:13.3px;height:0.8px;background:#CFCFCF;"></div>
<div class="t" style="left:178.2px;width:600px;text-align:center;top:153.78px;font-size:7.8px;color:#262626;font-weight:400;-webkit-text-stroke:0.106px #262626;">5</div>
<div class="a" style="left:472px;top:178.5px;width:13.3px;height:0.8px;background:#CFCFCF;"></div>
<div class="t" style="left:178.2px;width:600px;text-align:center;top:164.66px;font-size:7.8px;color:#262626;font-weight:400;-webkit-text-stroke:0.106px #262626;">6</div>
<div class="a" style="left:472px;top:189.38px;width:13.3px;height:0.8px;background:#CFCFCF;"></div>
<div class="t" style="left:178.2px;width:600px;text-align:center;top:175.54px;font-size:7.8px;color:#262626;font-weight:400;-webkit-text-stroke:0.106px #262626;">7</div>
<div class="a" style="left:472px;top:200.26px;width:13.3px;height:0.8px;background:#CFCFCF;"></div>
<div class="t" style="left:178.2px;width:600px;text-align:center;top:186.42px;font-size:7.8px;color:#262626;font-weight:400;-webkit-text-stroke:0.106px #262626;">8</div>
<div class="a" style="left:472px;top:211.14px;width:13.3px;height:0.8px;background:#CFCFCF;"></div>
<div class="t" style="left:178.2px;width:600px;text-align:center;top:197.30px;font-size:7.8px;color:#262626;font-weight:400;-webkit-text-stroke:0.106px #262626;">9</div>
<div class="a" style="left:472px;top:222.01999999999998px;width:13.3px;height:0.8px;background:#CFCFCF;"></div>
<div class="t" style="left:178.2px;width:600px;text-align:center;top:208.18px;font-size:7.8px;color:#262626;font-weight:400;-webkit-text-stroke:0.106px #262626;">10</div>
<div class="a" style="left:472px;top:232.9px;width:13.3px;height:0.8px;background:#CFCFCF;"></div>
<div class="t" style="left:178.2px;width:600px;text-align:center;top:219.06px;font-size:7.8px;color:#262626;font-weight:400;-webkit-text-stroke:0.106px #262626;">11</div>
<div class="a" style="left:472px;top:243.78px;width:13.3px;height:0.8px;background:#CFCFCF;"></div>
<div class="t" style="left:178.2px;width:600px;text-align:center;top:229.94px;font-size:7.8px;color:#262626;font-weight:400;-webkit-text-stroke:0.106px #262626;">12</div>
<div class="a" style="left:472px;top:254.66px;width:13.3px;height:0.8px;background:#CFCFCF;"></div>
<div class="t" style="left:178.2px;width:600px;text-align:center;top:240.82px;font-size:7.8px;color:#262626;font-weight:400;-webkit-text-stroke:0.106px #262626;">13</div>
<div class="a" style="left:472px;top:265.53999999999996px;width:13.3px;height:0.8px;background:#CFCFCF;"></div>
<div class="t" style="left:178.2px;width:600px;text-align:center;top:251.70px;font-size:7.8px;color:#262626;font-weight:400;-webkit-text-stroke:0.106px #262626;">14</div>
<div class="a" style="left:472px;top:276.42px;width:13.3px;height:0.8px;background:#CFCFCF;"></div>
<div class="t" style="left:178.2px;width:600px;text-align:center;top:262.58px;font-size:7.8px;color:#262626;font-weight:400;-webkit-text-stroke:0.106px #262626;">15</div>
<div class="a" style="left:472px;top:287.3px;width:13.3px;height:0.8px;background:#CFCFCF;"></div>
<div class="t" style="left:178.2px;width:600px;text-align:center;top:273.46px;font-size:7.8px;color:#262626;font-weight:400;-webkit-text-stroke:0.106px #262626;">16</div>
<div class="a" style="left:472px;top:298.18px;width:13.3px;height:0.8px;background:#CFCFCF;"></div>
<div class="t" style="left:178.2px;width:600px;text-align:center;top:284.34px;font-size:7.8px;color:#262626;font-weight:400;-webkit-text-stroke:0.106px #262626;">17</div>
<div class="a" style="left:472px;top:309.06px;width:13.3px;height:0.8px;background:#CFCFCF;"></div>
<div class="t" style="left:178.2px;width:600px;text-align:center;top:295.22px;font-size:7.8px;color:#262626;font-weight:400;-webkit-text-stroke:0.106px #262626;">18</div>
<div class="a" style="left:472px;top:319.94px;width:13.3px;height:0.8px;background:#CFCFCF;"></div>
<div class="t" style="left:178.2px;width:600px;text-align:center;top:306.10px;font-size:7.8px;color:#262626;font-weight:400;-webkit-text-stroke:0.106px #262626;">19</div>
<div class="a" style="left:472px;top:330.82000000000005px;width:13.3px;height:0.8px;background:#CFCFCF;"></div>
<div class="t" style="left:178.2px;width:600px;text-align:center;top:316.98px;font-size:7.8px;color:#262626;font-weight:400;-webkit-text-stroke:0.106px #262626;">20</div>
<div class="a" style="left:472px;top:341.70000000000005px;width:13.3px;height:0.8px;background:#CFCFCF;"></div>
<div class="t" style="left:178.2px;width:600px;text-align:center;top:327.86px;font-size:7.8px;color:#262626;font-weight:400;-webkit-text-stroke:0.106px #262626;">21</div>
<div class="a" style="left:472px;top:352.58000000000004px;width:13.3px;height:0.8px;background:#CFCFCF;"></div>
<div class="t" style="left:178.2px;width:600px;text-align:center;top:338.74px;font-size:7.8px;color:#262626;font-weight:400;-webkit-text-stroke:0.106px #262626;">22</div>
<div class="a" style="left:472px;top:363.46000000000004px;width:13.3px;height:0.8px;background:#CFCFCF;"></div>
<div class="t" style="left:178.2px;width:600px;text-align:center;top:349.62px;font-size:7.8px;color:#262626;font-weight:400;-webkit-text-stroke:0.106px #262626;">23</div>
<div class="a" style="left:472px;top:374.34000000000003px;width:13.3px;height:0.8px;background:#CFCFCF;"></div>
<div class="t" style="left:178.2px;width:600px;text-align:center;top:360.50px;font-size:7.8px;color:#262626;font-weight:400;-webkit-text-stroke:0.106px #262626;">24</div>
<div class="a" style="left:472px;top:385.22px;width:13.3px;height:0.8px;background:#CFCFCF;"></div>
<div class="t" style="left:178.2px;width:600px;text-align:center;top:371.38px;font-size:7.8px;color:#262626;font-weight:400;-webkit-text-stroke:0.106px #262626;">25</div>
<div class="a" style="left:472px;top:396.1px;width:13.3px;height:0.8px;background:#CFCFCF;"></div>
<div class="t" style="left:178.2px;width:600px;text-align:center;top:382.26px;font-size:7.8px;color:#262626;font-weight:400;-webkit-text-stroke:0.106px #262626;">26</div>
<div class="a" style="left:472px;top:406.98px;width:13.3px;height:0.8px;background:#CFCFCF;"></div>
<div class="t" style="left:178.2px;width:600px;text-align:center;top:393.14px;font-size:7.8px;color:#262626;font-weight:400;-webkit-text-stroke:0.106px #262626;">27</div>
<div class="a" style="left:472px;top:417.86px;width:13.3px;height:0.8px;background:#CFCFCF;"></div>
<div class="t" style="left:178.2px;width:600px;text-align:center;top:404.02px;font-size:7.8px;color:#262626;font-weight:400;-webkit-text-stroke:0.106px #262626;">28</div>
<div class="a" style="left:485.3px;top:113.4px;width:548px;height:11.2px;background:#DCE3F1;"></div>
<div class="a" style="left:523.9px;top:113.4px;width:1px;height:11.2px;background:#D0D8E8;"></div>
<div class="a" style="left:557.9px;top:113.4px;width:1px;height:11.2px;background:#D0D8E8;"></div>
<div class="a" style="left:618.0px;top:113.4px;width:1px;height:11.2px;background:#D0D8E8;"></div>
<div class="a" style="left:679.2px;top:113.4px;width:1px;height:11.2px;background:#D0D8E8;"></div>
<div class="a" style="left:749.9px;top:113.4px;width:1px;height:11.2px;background:#D0D8E8;"></div>
<div class="a" style="left:851.5px;top:113.4px;width:1px;height:11.2px;background:#D0D8E8;"></div>
<div class="a" style="left:952.0px;top:113.4px;width:1px;height:11.2px;background:#D0D8E8;"></div>
<div class="t" style="left:204.85000000000002px;width:600px;text-align:center;top:109.90px;font-size:7.7px;color:#1A1A1A;font-weight:700;transform:scaleX(0.97);transform-origin:center center;">Year</div>
<div class="t" style="left:241.39999999999998px;width:600px;text-align:center;top:109.90px;font-size:7.7px;color:#1A1A1A;font-weight:700;transform:scaleX(0.97);transform-origin:center center;">Month</div>
<div class="t" style="left:288.45000000000005px;width:600px;text-align:center;top:109.90px;font-size:7.7px;color:#1A1A1A;font-weight:700;transform:scaleX(0.97);transform-origin:center center;">Sales</div>
<div class="t" style="left:349.1px;width:600px;text-align:center;top:109.90px;font-size:7.7px;color:#1A1A1A;font-weight:700;transform:scaleX(0.97);transform-origin:center center;">COGS</div>
<div class="t" style="left:415.04999999999995px;width:600px;text-align:center;top:109.90px;font-size:7.7px;color:#1A1A1A;font-weight:700;transform:scaleX(0.97);transform-origin:center center;">SG&amp;A</div>
<div class="t" style="left:501.20000000000005px;width:600px;text-align:center;top:109.90px;font-size:7.7px;color:#1A1A1A;font-weight:700;transform:scaleX(0.97);transform-origin:center center;">Non-operating Income</div>
<div class="t" style="left:602.25px;width:600px;text-align:center;top:109.90px;font-size:7.7px;color:#1A1A1A;font-weight:700;transform:scaleX(0.97);transform-origin:center center;">Non-operating Expenses</div>
<div class="t" style="left:692.7px;width:600px;text-align:center;top:109.90px;font-size:7.7px;color:#1A1A1A;font-weight:700;transform:scaleX(0.97);transform-origin:center center;">Income Tax Expense</div>
<div class="t" style="left:204.85000000000002px;width:600px;text-align:center;top:119.74px;font-size:8.6px;color:#262626;font-weight:400;transform:scaleX(0.95);transform-origin:center center;-webkit-text-stroke:0.05px #262626;">2024</div>
<div class="t" style="left:241.39999999999998px;width:600px;text-align:center;top:119.74px;font-size:8.6px;color:#262626;font-weight:400;transform:scaleX(0.93);transform-origin:center center;-webkit-text-stroke:0.05px #262626;">Jan</div>
<div class="t" style="left:13.799999999999955px;width:600px;text-align:right;top:119.74px;font-size:8.6px;color:#262626;font-weight:400;transform:scaleX(0.8);transform-origin:right center;-webkit-text-stroke:0.05px #262626;">6,823,000,000</div>
<div class="t" style="left:75.0px;width:600px;text-align:right;top:119.74px;font-size:8.6px;color:#262626;font-weight:400;transform:scaleX(0.8);transform-origin:right center;-webkit-text-stroke:0.05px #262626;">2,314,000,000</div>
<div class="t" style="left:145.69999999999993px;width:600px;text-align:right;top:119.74px;font-size:8.6px;color:#262626;font-weight:400;transform:scaleX(0.8);transform-origin:right center;-webkit-text-stroke:0.05px #262626;">1,630,000,000</div>
<div class="t" style="left:247.29999999999995px;width:600px;text-align:right;top:119.74px;font-size:8.6px;color:#262626;font-weight:400;transform:scaleX(0.8);transform-origin:right center;-webkit-text-stroke:0.05px #262626;">4,702,000,000</div>
<div class="t" style="left:347.79999999999995px;width:600px;text-align:right;top:119.74px;font-size:8.6px;color:#262626;font-weight:400;transform:scaleX(0.8);transform-origin:right center;-webkit-text-stroke:0.05px #262626;">2,267,000,000</div>
<div class="t" style="left:430.29999999999995px;width:600px;text-align:right;top:119.74px;font-size:8.6px;color:#262626;font-weight:400;transform:scaleX(0.8);transform-origin:right center;-webkit-text-stroke:0.05px #262626;">446,000,000</div>
<div class="t" style="left:204.85000000000002px;width:600px;text-align:center;top:130.62px;font-size:8.6px;color:#262626;font-weight:400;transform:scaleX(0.95);transform-origin:center center;-webkit-text-stroke:0.05px #262626;">2024</div>
<div class="t" style="left:241.39999999999998px;width:600px;text-align:center;top:130.62px;font-size:8.6px;color:#262626;font-weight:400;transform:scaleX(0.93);transform-origin:center center;-webkit-text-stroke:0.05px #262626;">Feb</div>
<div class="t" style="left:13.799999999999955px;width:600px;text-align:right;top:130.62px;font-size:8.6px;color:#262626;font-weight:400;transform:scaleX(0.8);transform-origin:right center;-webkit-text-stroke:0.05px #262626;">6,974,000,000</div>
<div class="t" style="left:75.0px;width:600px;text-align:right;top:130.62px;font-size:8.6px;color:#262626;font-weight:400;transform:scaleX(0.8);transform-origin:right center;-webkit-text-stroke:0.05px #262626;">2,482,000,000</div>
<div class="t" style="left:145.69999999999993px;width:600px;text-align:right;top:130.62px;font-size:8.6px;color:#262626;font-weight:400;transform:scaleX(0.8);transform-origin:right center;-webkit-text-stroke:0.05px #262626;">1,610,000,000</div>
<div class="t" style="left:247.29999999999995px;width:600px;text-align:right;top:130.62px;font-size:8.6px;color:#262626;font-weight:400;transform:scaleX(0.8);transform-origin:right center;-webkit-text-stroke:0.05px #262626;">4,924,000,000</div>
<div class="t" style="left:347.79999999999995px;width:600px;text-align:right;top:130.62px;font-size:8.6px;color:#262626;font-weight:400;transform:scaleX(0.8);transform-origin:right center;-webkit-text-stroke:0.05px #262626;">2,400,000,000</div>
<div class="t" style="left:430.29999999999995px;width:600px;text-align:right;top:130.62px;font-size:8.6px;color:#262626;font-weight:400;transform:scaleX(0.8);transform-origin:right center;-webkit-text-stroke:0.05px #262626;">472,000,000</div>
<div class="t" style="left:204.85000000000002px;width:600px;text-align:center;top:141.50px;font-size:8.6px;color:#262626;font-weight:400;transform:scaleX(0.95);transform-origin:center center;-webkit-text-stroke:0.05px #262626;">2024</div>
<div class="t" style="left:241.39999999999998px;width:600px;text-align:center;top:141.50px;font-size:8.6px;color:#262626;font-weight:400;transform:scaleX(0.93);transform-origin:center center;-webkit-text-stroke:0.05px #262626;">Mar</div>
<div class="t" style="left:13.799999999999955px;width:600px;text-align:right;top:141.50px;font-size:8.6px;color:#262626;font-weight:400;transform:scaleX(0.8);transform-origin:right center;-webkit-text-stroke:0.05px #262626;">7,013,000,000</div>
<div class="t" style="left:75.0px;width:600px;text-align:right;top:141.50px;font-size:8.6px;color:#262626;font-weight:400;transform:scaleX(0.8);transform-origin:right center;-webkit-text-stroke:0.05px #262626;">2,514,000,000</div>
<div class="t" style="left:145.69999999999993px;width:600px;text-align:right;top:141.50px;font-size:8.6px;color:#262626;font-weight:400;transform:scaleX(0.8);transform-origin:right center;-webkit-text-stroke:0.05px #262626;">1,742,000,000</div>
<div class="t" style="left:247.29999999999995px;width:600px;text-align:right;top:141.50px;font-size:8.6px;color:#262626;font-weight:400;transform:scaleX(0.8);transform-origin:right center;-webkit-text-stroke:0.05px #262626;">5,658,000,000</div>
<div class="t" style="left:347.79999999999995px;width:600px;text-align:right;top:141.50px;font-size:8.6px;color:#262626;font-weight:400;transform:scaleX(0.8);transform-origin:right center;-webkit-text-stroke:0.05px #262626;">2,079,000,000</div>
<div class="t" style="left:430.29999999999995px;width:600px;text-align:right;top:141.50px;font-size:8.6px;color:#262626;font-weight:400;transform:scaleX(0.8);transform-origin:right center;-webkit-text-stroke:0.05px #262626;">396,000,000</div>
<div class="t" style="left:204.85000000000002px;width:600px;text-align:center;top:152.38px;font-size:8.6px;color:#262626;font-weight:400;transform:scaleX(0.95);transform-origin:center center;-webkit-text-stroke:0.05px #262626;">2024</div>
<div class="t" style="left:241.39999999999998px;width:600px;text-align:center;top:152.38px;font-size:8.6px;color:#262626;font-weight:400;transform:scaleX(0.93);transform-origin:center center;-webkit-text-stroke:0.05px #262626;">Apr</div>
<div class="t" style="left:13.799999999999955px;width:600px;text-align:right;top:152.38px;font-size:8.6px;color:#262626;font-weight:400;transform:scaleX(0.8);transform-origin:right center;-webkit-text-stroke:0.05px #262626;">7,148,000,000</div>
<div class="t" style="left:75.0px;width:600px;text-align:right;top:152.38px;font-size:8.6px;color:#262626;font-weight:400;transform:scaleX(0.8);transform-origin:right center;-webkit-text-stroke:0.05px #262626;">2,545,000,000</div>
<div class="t" style="left:145.69999999999993px;width:600px;text-align:right;top:152.38px;font-size:8.6px;color:#262626;font-weight:400;transform:scaleX(0.8);transform-origin:right center;-webkit-text-stroke:0.05px #262626;">1,833,000,000</div>
<div class="t" style="left:247.29999999999995px;width:600px;text-align:right;top:152.38px;font-size:8.6px;color:#262626;font-weight:400;transform:scaleX(0.8);transform-origin:right center;-webkit-text-stroke:0.05px #262626;">6,887,000,000</div>
<div class="t" style="left:347.79999999999995px;width:600px;text-align:right;top:152.38px;font-size:8.6px;color:#262626;font-weight:400;transform:scaleX(0.8);transform-origin:right center;-webkit-text-stroke:0.05px #262626;">2,450,000,000</div>
<div class="t" style="left:430.29999999999995px;width:600px;text-align:right;top:152.38px;font-size:8.6px;color:#262626;font-weight:400;transform:scaleX(0.8);transform-origin:right center;-webkit-text-stroke:0.05px #262626;">542,000,000</div>
<div class="t" style="left:204.85000000000002px;width:600px;text-align:center;top:163.26px;font-size:8.6px;color:#262626;font-weight:400;transform:scaleX(0.95);transform-origin:center center;-webkit-text-stroke:0.05px #262626;">2024</div>
<div class="t" style="left:241.39999999999998px;width:600px;text-align:center;top:163.26px;font-size:8.6px;color:#262626;font-weight:400;transform:scaleX(0.93);transform-origin:center center;-webkit-text-stroke:0.05px #262626;">May</div>
<div class="t" style="left:13.799999999999955px;width:600px;text-align:right;top:163.26px;font-size:8.6px;color:#262626;font-weight:400;transform:scaleX(0.8);transform-origin:right center;-webkit-text-stroke:0.05px #262626;">7,420,000,000</div>
<div class="t" style="left:75.0px;width:600px;text-align:right;top:163.26px;font-size:8.6px;color:#262626;font-weight:400;transform:scaleX(0.8);transform-origin:right center;-webkit-text-stroke:0.05px #262626;">2,565,000,000</div>
<div class="t" style="left:145.69999999999993px;width:600px;text-align:right;top:163.26px;font-size:8.6px;color:#262626;font-weight:400;transform:scaleX(0.8);transform-origin:right center;-webkit-text-stroke:0.05px #262626;">1,527,000,000</div>
<div class="t" style="left:247.29999999999995px;width:600px;text-align:right;top:163.26px;font-size:8.6px;color:#262626;font-weight:400;transform:scaleX(0.8);transform-origin:right center;-webkit-text-stroke:0.05px #262626;">6,963,000,000</div>
<div class="t" style="left:347.79999999999995px;width:600px;text-align:right;top:163.26px;font-size:8.6px;color:#262626;font-weight:400;transform:scaleX(0.8);transform-origin:right center;-webkit-text-stroke:0.05px #262626;">2,431,000,000</div>
<div class="t" style="left:430.29999999999995px;width:600px;text-align:right;top:163.26px;font-size:8.6px;color:#262626;font-weight:400;transform:scaleX(0.8);transform-origin:right center;-webkit-text-stroke:0.05px #262626;">430,000,000</div>
<div class="t" style="left:204.85000000000002px;width:600px;text-align:center;top:174.14px;font-size:8.6px;color:#262626;font-weight:400;transform:scaleX(0.95);transform-origin:center center;-webkit-text-stroke:0.05px #262626;">2024</div>
<div class="t" style="left:241.39999999999998px;width:600px;text-align:center;top:174.14px;font-size:8.6px;color:#262626;font-weight:400;transform:scaleX(0.93);transform-origin:center center;-webkit-text-stroke:0.05px #262626;">Jun</div>
<div class="t" style="left:13.799999999999955px;width:600px;text-align:right;top:174.14px;font-size:8.6px;color:#262626;font-weight:400;transform:scaleX(0.8);transform-origin:right center;-webkit-text-stroke:0.05px #262626;">7,469,000,000</div>
<div class="t" style="left:75.0px;width:600px;text-align:right;top:174.14px;font-size:8.6px;color:#262626;font-weight:400;transform:scaleX(0.8);transform-origin:right center;-webkit-text-stroke:0.05px #262626;">2,639,000,000</div>
<div class="t" style="left:145.69999999999993px;width:600px;text-align:right;top:174.14px;font-size:8.6px;color:#262626;font-weight:400;transform:scaleX(0.8);transform-origin:right center;-webkit-text-stroke:0.05px #262626;">1,709,000,000</div>
<div class="t" style="left:247.29999999999995px;width:600px;text-align:right;top:174.14px;font-size:8.6px;color:#262626;font-weight:400;transform:scaleX(0.8);transform-origin:right center;-webkit-text-stroke:0.05px #262626;">7,477,000,000</div>
<div class="t" style="left:347.79999999999995px;width:600px;text-align:right;top:174.14px;font-size:8.6px;color:#262626;font-weight:400;transform:scaleX(0.8);transform-origin:right center;-webkit-text-stroke:0.05px #262626;">1,824,000,000</div>
<div class="t" style="left:430.29999999999995px;width:600px;text-align:right;top:174.14px;font-size:8.6px;color:#262626;font-weight:400;transform:scaleX(0.8);transform-origin:right center;-webkit-text-stroke:0.05px #262626;">428,000,000</div>
<div class="t" style="left:204.85000000000002px;width:600px;text-align:center;top:185.02px;font-size:8.6px;color:#262626;font-weight:400;transform:scaleX(0.95);transform-origin:center center;-webkit-text-stroke:0.05px #262626;">2024</div>
<div class="t" style="left:241.39999999999998px;width:600px;text-align:center;top:185.02px;font-size:8.6px;color:#262626;font-weight:400;transform:scaleX(0.93);transform-origin:center center;-webkit-text-stroke:0.05px #262626;">Jul</div>
<div class="t" style="left:13.799999999999955px;width:600px;text-align:right;top:185.02px;font-size:8.6px;color:#262626;font-weight:400;transform:scaleX(0.8);transform-origin:right center;-webkit-text-stroke:0.05px #262626;">7,512,000,000</div>
<div class="t" style="left:75.0px;width:600px;text-align:right;top:185.02px;font-size:8.6px;color:#262626;font-weight:400;transform:scaleX(0.8);transform-origin:right center;-webkit-text-stroke:0.05px #262626;">2,710,000,000</div>
<div class="t" style="left:145.69999999999993px;width:600px;text-align:right;top:185.02px;font-size:8.6px;color:#262626;font-weight:400;transform:scaleX(0.8);transform-origin:right center;-webkit-text-stroke:0.05px #262626;">1,990,000,000</div>
<div class="t" style="left:247.29999999999995px;width:600px;text-align:right;top:185.02px;font-size:8.6px;color:#262626;font-weight:400;transform:scaleX(0.8);transform-origin:right center;-webkit-text-stroke:0.05px #262626;">8,302,000,000</div>
<div class="t" style="left:347.79999999999995px;width:600px;text-align:right;top:185.02px;font-size:8.6px;color:#262626;font-weight:400;transform:scaleX(0.8);transform-origin:right center;-webkit-text-stroke:0.05px #262626;">1,415,000,000</div>
<div class="t" style="left:430.29999999999995px;width:600px;text-align:right;top:185.02px;font-size:8.6px;color:#262626;font-weight:400;transform:scaleX(0.8);transform-origin:right center;-webkit-text-stroke:0.05px #262626;">401,000,000</div>
<div class="t" style="left:204.85000000000002px;width:600px;text-align:center;top:195.90px;font-size:8.6px;color:#262626;font-weight:400;transform:scaleX(0.95);transform-origin:center center;-webkit-text-stroke:0.05px #262626;">2024</div>
<div class="t" style="left:241.39999999999998px;width:600px;text-align:center;top:195.90px;font-size:8.6px;color:#262626;font-weight:400;transform:scaleX(0.93);transform-origin:center center;-webkit-text-stroke:0.05px #262626;">Aug</div>
<div class="t" style="left:13.799999999999955px;width:600px;text-align:right;top:195.90px;font-size:8.6px;color:#262626;font-weight:400;transform:scaleX(0.8);transform-origin:right center;-webkit-text-stroke:0.05px #262626;">7,758,000,000</div>
<div class="t" style="left:75.0px;width:600px;text-align:right;top:195.90px;font-size:8.6px;color:#262626;font-weight:400;transform:scaleX(0.8);transform-origin:right center;-webkit-text-stroke:0.05px #262626;">2,773,000,000</div>
<div class="t" style="left:145.69999999999993px;width:600px;text-align:right;top:195.90px;font-size:8.6px;color:#262626;font-weight:400;transform:scaleX(0.8);transform-origin:right center;-webkit-text-stroke:0.05px #262626;">2,174,000,000</div>
<div class="t" style="left:247.29999999999995px;width:600px;text-align:right;top:195.90px;font-size:8.6px;color:#262626;font-weight:400;transform:scaleX(0.8);transform-origin:right center;-webkit-text-stroke:0.05px #262626;">7,125,000,000</div>
<div class="t" style="left:347.79999999999995px;width:600px;text-align:right;top:195.90px;font-size:8.6px;color:#262626;font-weight:400;transform:scaleX(0.8);transform-origin:right center;-webkit-text-stroke:0.05px #262626;">1,936,000,000</div>
<div class="t" style="left:430.29999999999995px;width:600px;text-align:right;top:195.90px;font-size:8.6px;color:#262626;font-weight:400;transform:scaleX(0.8);transform-origin:right center;-webkit-text-stroke:0.05px #262626;">634,000,000</div>
<div class="t" style="left:204.85000000000002px;width:600px;text-align:center;top:206.78px;font-size:8.6px;color:#262626;font-weight:400;transform:scaleX(0.95);transform-origin:center center;-webkit-text-stroke:0.05px #262626;">2024</div>
<div class="t" style="left:241.39999999999998px;width:600px;text-align:center;top:206.78px;font-size:8.6px;color:#262626;font-weight:400;transform:scaleX(0.93);transform-origin:center center;-webkit-text-stroke:0.05px #262626;">Sep</div>
<div class="t" style="left:13.799999999999955px;width:600px;text-align:right;top:206.78px;font-size:8.6px;color:#262626;font-weight:400;transform:scaleX(0.8);transform-origin:right center;-webkit-text-stroke:0.05px #262626;">8,014,000,000</div>
<div class="t" style="left:75.0px;width:600px;text-align:right;top:206.78px;font-size:8.6px;color:#262626;font-weight:400;transform:scaleX(0.8);transform-origin:right center;-webkit-text-stroke:0.05px #262626;">2,814,000,000</div>
<div class="t" style="left:145.69999999999993px;width:600px;text-align:right;top:206.78px;font-size:8.6px;color:#262626;font-weight:400;transform:scaleX(0.8);transform-origin:right center;-webkit-text-stroke:0.05px #262626;">2,406,000,000</div>
<div class="t" style="left:247.29999999999995px;width:600px;text-align:right;top:206.78px;font-size:8.6px;color:#262626;font-weight:400;transform:scaleX(0.8);transform-origin:right center;-webkit-text-stroke:0.05px #262626;">7,838,000,000</div>
<div class="t" style="left:347.79999999999995px;width:600px;text-align:right;top:206.78px;font-size:8.6px;color:#262626;font-weight:400;transform:scaleX(0.8);transform-origin:right center;-webkit-text-stroke:0.05px #262626;">2,611,000,000</div>
<div class="t" style="left:430.29999999999995px;width:600px;text-align:right;top:206.78px;font-size:8.6px;color:#262626;font-weight:400;transform:scaleX(0.8);transform-origin:right center;-webkit-text-stroke:0.05px #262626;">705,000,000</div>
<div class="t" style="left:204.85000000000002px;width:600px;text-align:center;top:217.66px;font-size:8.6px;color:#262626;font-weight:400;transform:scaleX(0.95);transform-origin:center center;-webkit-text-stroke:0.05px #262626;">2024</div>
<div class="t" style="left:241.39999999999998px;width:600px;text-align:center;top:217.66px;font-size:8.6px;color:#262626;font-weight:400;transform:scaleX(0.93);transform-origin:center center;-webkit-text-stroke:0.05px #262626;">Oct</div>
<div class="t" style="left:13.799999999999955px;width:600px;text-align:right;top:217.66px;font-size:8.6px;color:#262626;font-weight:400;transform:scaleX(0.8);transform-origin:right center;-webkit-text-stroke:0.05px #262626;">8,692,000,000</div>
<div class="t" style="left:75.0px;width:600px;text-align:right;top:217.66px;font-size:8.6px;color:#262626;font-weight:400;transform:scaleX(0.8);transform-origin:right center;-webkit-text-stroke:0.05px #262626;">3,140,000,000</div>
<div class="t" style="left:145.69999999999993px;width:600px;text-align:right;top:217.66px;font-size:8.6px;color:#262626;font-weight:400;transform:scaleX(0.8);transform-origin:right center;-webkit-text-stroke:0.05px #262626;">2,196,000,000</div>
<div class="t" style="left:247.29999999999995px;width:600px;text-align:right;top:217.66px;font-size:8.6px;color:#262626;font-weight:400;transform:scaleX(0.8);transform-origin:right center;-webkit-text-stroke:0.05px #262626;">7,320,000,000</div>
<div class="t" style="left:347.79999999999995px;width:600px;text-align:right;top:217.66px;font-size:8.6px;color:#262626;font-weight:400;transform:scaleX(0.8);transform-origin:right center;-webkit-text-stroke:0.05px #262626;">2,385,000,000</div>
<div class="t" style="left:430.29999999999995px;width:600px;text-align:right;top:217.66px;font-size:8.6px;color:#262626;font-weight:400;transform:scaleX(0.8);transform-origin:right center;-webkit-text-stroke:0.05px #262626;">715,000,000</div>
<div class="t" style="left:204.85000000000002px;width:600px;text-align:center;top:228.54px;font-size:8.6px;color:#262626;font-weight:400;transform:scaleX(0.95);transform-origin:center center;-webkit-text-stroke:0.05px #262626;">2024</div>
<div class="t" style="left:241.39999999999998px;width:600px;text-align:center;top:228.54px;font-size:8.6px;color:#262626;font-weight:400;transform:scaleX(0.93);transform-origin:center center;-webkit-text-stroke:0.05px #262626;">Nov</div>
<div class="t" style="left:13.799999999999955px;width:600px;text-align:right;top:228.54px;font-size:8.6px;color:#262626;font-weight:400;transform:scaleX(0.8);transform-origin:right center;-webkit-text-stroke:0.05px #262626;">9,737,000,000</div>
<div class="t" style="left:75.0px;width:600px;text-align:right;top:228.54px;font-size:8.6px;color:#262626;font-weight:400;transform:scaleX(0.8);transform-origin:right center;-webkit-text-stroke:0.05px #262626;">3,412,000,000</div>
<div class="t" style="left:145.69999999999993px;width:600px;text-align:right;top:228.54px;font-size:8.6px;color:#262626;font-weight:400;transform:scaleX(0.8);transform-origin:right center;-webkit-text-stroke:0.05px #262626;">2,097,000,000</div>
<div class="t" style="left:247.29999999999995px;width:600px;text-align:right;top:228.54px;font-size:8.6px;color:#262626;font-weight:400;transform:scaleX(0.8);transform-origin:right center;-webkit-text-stroke:0.05px #262626;">7,899,000,000</div>
<div class="t" style="left:347.79999999999995px;width:600px;text-align:right;top:228.54px;font-size:8.6px;color:#262626;font-weight:400;transform:scaleX(0.8);transform-origin:right center;-webkit-text-stroke:0.05px #262626;">2,000,000,000</div>
<div class="t" style="left:430.29999999999995px;width:600px;text-align:right;top:228.54px;font-size:8.6px;color:#262626;font-weight:400;transform:scaleX(0.8);transform-origin:right center;-webkit-text-stroke:0.05px #262626;">842,000,000</div>
<div class="t" style="left:204.85000000000002px;width:600px;text-align:center;top:239.42px;font-size:8.6px;color:#262626;font-weight:400;transform:scaleX(0.95);transform-origin:center center;-webkit-text-stroke:0.05px #262626;">2024</div>
<div class="t" style="left:241.39999999999998px;width:600px;text-align:center;top:239.42px;font-size:8.6px;color:#262626;font-weight:400;transform:scaleX(0.93);transform-origin:center center;-webkit-text-stroke:0.05px #262626;">Dec</div>
<div class="t" style="left:13.799999999999955px;width:600px;text-align:right;top:239.42px;font-size:8.6px;color:#262626;font-weight:400;transform:scaleX(0.8);transform-origin:right center;-webkit-text-stroke:0.05px #262626;">9,243,000,000</div>
<div class="t" style="left:75.0px;width:600px;text-align:right;top:239.42px;font-size:8.6px;color:#262626;font-weight:400;transform:scaleX(0.8);transform-origin:right center;-webkit-text-stroke:0.05px #262626;">3,264,000,000</div>
<div class="t" style="left:145.69999999999993px;width:600px;text-align:right;top:239.42px;font-size:8.6px;color:#262626;font-weight:400;transform:scaleX(0.8);transform-origin:right center;-webkit-text-stroke:0.05px #262626;">2,415,000,000</div>
<div class="t" style="left:247.29999999999995px;width:600px;text-align:right;top:239.42px;font-size:8.6px;color:#262626;font-weight:400;transform:scaleX(0.8);transform-origin:right center;-webkit-text-stroke:0.05px #262626;">7,039,000,000</div>
<div class="t" style="left:347.79999999999995px;width:600px;text-align:right;top:239.42px;font-size:8.6px;color:#262626;font-weight:400;transform:scaleX(0.8);transform-origin:right center;-webkit-text-stroke:0.05px #262626;">1,720,000,000</div>
<div class="t" style="left:430.29999999999995px;width:600px;text-align:right;top:239.42px;font-size:8.6px;color:#262626;font-weight:400;transform:scaleX(0.8);transform-origin:right center;-webkit-text-stroke:0.05px #262626;">811,000,000</div>
<div class="t" style="left:204.85000000000002px;width:600px;text-align:center;top:250.30px;font-size:8.6px;color:#262626;font-weight:400;transform:scaleX(0.95);transform-origin:center center;-webkit-text-stroke:0.05px #262626;">2025</div>
<div class="t" style="left:241.39999999999998px;width:600px;text-align:center;top:250.30px;font-size:8.6px;color:#262626;font-weight:400;transform:scaleX(0.93);transform-origin:center center;-webkit-text-stroke:0.05px #262626;">Jan</div>
<div class="t" style="left:13.799999999999955px;width:600px;text-align:right;top:250.30px;font-size:8.6px;color:#262626;font-weight:400;transform:scaleX(0.8);transform-origin:right center;-webkit-text-stroke:0.05px #262626;">7,741,285,938</div>
<div class="t" style="left:75.0px;width:600px;text-align:right;top:250.30px;font-size:8.6px;color:#262626;font-weight:400;transform:scaleX(0.8);transform-origin:right center;-webkit-text-stroke:0.05px #262626;">2,549,009,797</div>
<div class="t" style="left:145.69999999999993px;width:600px;text-align:right;top:250.30px;font-size:8.6px;color:#262626;font-weight:400;transform:scaleX(0.8);transform-origin:right center;-webkit-text-stroke:0.05px #262626;">2,632,057,623</div>
<div class="t" style="left:247.29999999999995px;width:600px;text-align:right;top:250.30px;font-size:8.6px;color:#262626;font-weight:400;transform:scaleX(0.8);transform-origin:right center;-webkit-text-stroke:0.05px #262626;">7,683,231,321</div>
<div class="t" style="left:347.79999999999995px;width:600px;text-align:right;top:250.30px;font-size:8.6px;color:#262626;font-weight:400;transform:scaleX(0.8);transform-origin:right center;-webkit-text-stroke:0.05px #262626;">1,631,274,857</div>
<div class="t" style="left:430.29999999999995px;width:600px;text-align:right;top:250.30px;font-size:8.6px;color:#262626;font-weight:400;transform:scaleX(0.8);transform-origin:right center;-webkit-text-stroke:0.05px #262626;">778,120,733</div>
<div class="t" style="left:204.85000000000002px;width:600px;text-align:center;top:261.18px;font-size:8.6px;color:#262626;font-weight:400;transform:scaleX(0.95);transform-origin:center center;-webkit-text-stroke:0.05px #262626;">2025</div>
<div class="t" style="left:241.39999999999998px;width:600px;text-align:center;top:261.18px;font-size:8.6px;color:#262626;font-weight:400;transform:scaleX(0.93);transform-origin:center center;-webkit-text-stroke:0.05px #262626;">Feb</div>
<div class="t" style="left:13.799999999999955px;width:600px;text-align:right;top:261.18px;font-size:8.6px;color:#262626;font-weight:400;transform:scaleX(0.8);transform-origin:right center;-webkit-text-stroke:0.05px #262626;">7,412,827,686</div>
<div class="t" style="left:75.0px;width:600px;text-align:right;top:261.18px;font-size:8.6px;color:#262626;font-weight:400;transform:scaleX(0.8);transform-origin:right center;-webkit-text-stroke:0.05px #262626;">2,465,481,093</div>
<div class="t" style="left:145.69999999999993px;width:600px;text-align:right;top:261.18px;font-size:8.6px;color:#262626;font-weight:400;transform:scaleX(0.8);transform-origin:right center;-webkit-text-stroke:0.05px #262626;">2,442,281,514</div>
<div class="t" style="left:247.29999999999995px;width:600px;text-align:right;top:261.18px;font-size:8.6px;color:#262626;font-weight:400;transform:scaleX(0.8);transform-origin:right center;-webkit-text-stroke:0.05px #262626;">7,158,585,408</div>
<div class="t" style="left:347.79999999999995px;width:600px;text-align:right;top:261.18px;font-size:8.6px;color:#262626;font-weight:400;transform:scaleX(0.8);transform-origin:right center;-webkit-text-stroke:0.05px #262626;">1,546,727,352</div>
<div class="t" style="left:430.29999999999995px;width:600px;text-align:right;top:261.18px;font-size:8.6px;color:#262626;font-weight:400;transform:scaleX(0.8);transform-origin:right center;-webkit-text-stroke:0.05px #262626;">417,977,414</div>
<div class="t" style="left:204.85000000000002px;width:600px;text-align:center;top:272.06px;font-size:8.6px;color:#262626;font-weight:400;transform:scaleX(0.95);transform-origin:center center;-webkit-text-stroke:0.05px #262626;">2025</div>
<div class="t" style="left:241.39999999999998px;width:600px;text-align:center;top:272.06px;font-size:8.6px;color:#262626;font-weight:400;transform:scaleX(0.93);transform-origin:center center;-webkit-text-stroke:0.05px #262626;">Mar</div>
<div class="t" style="left:13.799999999999955px;width:600px;text-align:right;top:272.06px;font-size:8.6px;color:#262626;font-weight:400;transform:scaleX(0.8);transform-origin:right center;-webkit-text-stroke:0.05px #262626;">8,669,607,630</div>
<div class="t" style="left:75.0px;width:600px;text-align:right;top:272.06px;font-size:8.6px;color:#262626;font-weight:400;transform:scaleX(0.8);transform-origin:right center;-webkit-text-stroke:0.05px #262626;">2,504,083,742</div>
<div class="t" style="left:145.69999999999993px;width:600px;text-align:right;top:272.06px;font-size:8.6px;color:#262626;font-weight:400;transform:scaleX(0.8);transform-origin:right center;-webkit-text-stroke:0.05px #262626;">1,966,430,019</div>
<div class="t" style="left:247.29999999999995px;width:600px;text-align:right;top:272.06px;font-size:8.6px;color:#262626;font-weight:400;transform:scaleX(0.8);transform-origin:right center;-webkit-text-stroke:0.05px #262626;">6,650,054,023</div>
<div class="t" style="left:347.79999999999995px;width:600px;text-align:right;top:272.06px;font-size:8.6px;color:#262626;font-weight:400;transform:scaleX(0.8);transform-origin:right center;-webkit-text-stroke:0.05px #262626;">2,636,719,752</div>
<div class="t" style="left:430.29999999999995px;width:600px;text-align:right;top:272.06px;font-size:8.6px;color:#262626;font-weight:400;transform:scaleX(0.8);transform-origin:right center;-webkit-text-stroke:0.05px #262626;">454,039,803</div>
<div class="t" style="left:204.85000000000002px;width:600px;text-align:center;top:282.94px;font-size:8.6px;color:#262626;font-weight:400;transform:scaleX(0.95);transform-origin:center center;-webkit-text-stroke:0.05px #262626;">2025</div>
<div class="t" style="left:241.39999999999998px;width:600px;text-align:center;top:282.94px;font-size:8.6px;color:#262626;font-weight:400;transform:scaleX(0.93);transform-origin:center center;-webkit-text-stroke:0.05px #262626;">Apr</div>
<div class="t" style="left:13.799999999999955px;width:600px;text-align:right;top:282.94px;font-size:8.6px;color:#262626;font-weight:400;transform:scaleX(0.8);transform-origin:right center;-webkit-text-stroke:0.05px #262626;">9,803,045,360</div>
<div class="t" style="left:75.0px;width:600px;text-align:right;top:282.94px;font-size:8.6px;color:#262626;font-weight:400;transform:scaleX(0.8);transform-origin:right center;-webkit-text-stroke:0.05px #262626;">2,559,819,688</div>
<div class="t" style="left:145.69999999999993px;width:600px;text-align:right;top:282.94px;font-size:8.6px;color:#262626;font-weight:400;transform:scaleX(0.8);transform-origin:right center;-webkit-text-stroke:0.05px #262626;">1,628,060,887</div>
<div class="t" style="left:247.29999999999995px;width:600px;text-align:right;top:282.94px;font-size:8.6px;color:#262626;font-weight:400;transform:scaleX(0.8);transform-origin:right center;-webkit-text-stroke:0.05px #262626;">6,666,730,385</div>
<div class="t" style="left:347.79999999999995px;width:600px;text-align:right;top:282.94px;font-size:8.6px;color:#262626;font-weight:400;transform:scaleX(0.8);transform-origin:right center;-webkit-text-stroke:0.05px #262626;">2,146,926,608</div>
<div class="t" style="left:430.29999999999995px;width:600px;text-align:right;top:282.94px;font-size:8.6px;color:#262626;font-weight:400;transform:scaleX(0.8);transform-origin:right center;-webkit-text-stroke:0.05px #262626;">466,137,077</div>
<div class="t" style="left:204.85000000000002px;width:600px;text-align:center;top:293.82px;font-size:8.6px;color:#262626;font-weight:400;transform:scaleX(0.95);transform-origin:center center;-webkit-text-stroke:0.05px #262626;">2025</div>
<div class="t" style="left:241.39999999999998px;width:600px;text-align:center;top:293.82px;font-size:8.6px;color:#262626;font-weight:400;transform:scaleX(0.93);transform-origin:center center;-webkit-text-stroke:0.05px #262626;">May</div>
<div class="t" style="left:13.799999999999955px;width:600px;text-align:right;top:293.82px;font-size:8.6px;color:#262626;font-weight:400;transform:scaleX(0.8);transform-origin:right center;-webkit-text-stroke:0.05px #262626;">7,196,296,849</div>
<div class="t" style="left:75.0px;width:600px;text-align:right;top:293.82px;font-size:8.6px;color:#262626;font-weight:400;transform:scaleX(0.8);transform-origin:right center;-webkit-text-stroke:0.05px #262626;">2,340,839,845</div>
<div class="t" style="left:145.69999999999993px;width:600px;text-align:right;top:293.82px;font-size:8.6px;color:#262626;font-weight:400;transform:scaleX(0.8);transform-origin:right center;-webkit-text-stroke:0.05px #262626;">2,058,053,660</div>
<div class="t" style="left:247.29999999999995px;width:600px;text-align:right;top:293.82px;font-size:8.6px;color:#262626;font-weight:400;transform:scaleX(0.8);transform-origin:right center;-webkit-text-stroke:0.05px #262626;">4,275,631,272</div>
<div class="t" style="left:347.79999999999995px;width:600px;text-align:right;top:293.82px;font-size:8.6px;color:#262626;font-weight:400;transform:scaleX(0.8);transform-origin:right center;-webkit-text-stroke:0.05px #262626;">2,293,993,488</div>
<div class="t" style="left:430.29999999999995px;width:600px;text-align:right;top:293.82px;font-size:8.6px;color:#262626;font-weight:400;transform:scaleX(0.8);transform-origin:right center;-webkit-text-stroke:0.05px #262626;">767,653,241</div>
<div class="t" style="left:204.85000000000002px;width:600px;text-align:center;top:304.70px;font-size:8.6px;color:#262626;font-weight:400;transform:scaleX(0.95);transform-origin:center center;-webkit-text-stroke:0.05px #262626;">2025</div>
<div class="t" style="left:241.39999999999998px;width:600px;text-align:center;top:304.70px;font-size:8.6px;color:#262626;font-weight:400;transform:scaleX(0.93);transform-origin:center center;-webkit-text-stroke:0.05px #262626;">Jun</div>
<div class="t" style="left:13.799999999999955px;width:600px;text-align:right;top:304.70px;font-size:8.6px;color:#262626;font-weight:400;transform:scaleX(0.8);transform-origin:right center;-webkit-text-stroke:0.05px #262626;">9,421,933,609</div>
<div class="t" style="left:75.0px;width:600px;text-align:right;top:304.70px;font-size:8.6px;color:#262626;font-weight:400;transform:scaleX(0.8);transform-origin:right center;-webkit-text-stroke:0.05px #262626;">2,474,229,016</div>
<div class="t" style="left:145.69999999999993px;width:600px;text-align:right;top:304.70px;font-size:8.6px;color:#262626;font-weight:400;transform:scaleX(0.8);transform-origin:right center;-webkit-text-stroke:0.05px #262626;">2,201,723,401</div>
<div class="t" style="left:247.29999999999995px;width:600px;text-align:right;top:304.70px;font-size:8.6px;color:#262626;font-weight:400;transform:scaleX(0.8);transform-origin:right center;-webkit-text-stroke:0.05px #262626;">5,399,253,106</div>
<div class="t" style="left:347.79999999999995px;width:600px;text-align:right;top:304.70px;font-size:8.6px;color:#262626;font-weight:400;transform:scaleX(0.8);transform-origin:right center;-webkit-text-stroke:0.05px #262626;">2,570,608,188</div>
<div class="t" style="left:430.29999999999995px;width:600px;text-align:right;top:304.70px;font-size:8.6px;color:#262626;font-weight:400;transform:scaleX(0.8);transform-origin:right center;-webkit-text-stroke:0.05px #262626;">550,415,841</div>
<div class="t" style="left:204.85000000000002px;width:600px;text-align:center;top:315.58px;font-size:8.6px;color:#262626;font-weight:400;transform:scaleX(0.95);transform-origin:center center;-webkit-text-stroke:0.05px #262626;">2025</div>
<div class="t" style="left:241.39999999999998px;width:600px;text-align:center;top:315.58px;font-size:8.6px;color:#262626;font-weight:400;transform:scaleX(0.93);transform-origin:center center;-webkit-text-stroke:0.05px #262626;">Jul</div>
<div class="t" style="left:13.799999999999955px;width:600px;text-align:right;top:315.58px;font-size:8.6px;color:#262626;font-weight:400;transform:scaleX(0.8);transform-origin:right center;-webkit-text-stroke:0.05px #262626;">8,673,709,391</div>
<div class="t" style="left:75.0px;width:600px;text-align:right;top:315.58px;font-size:8.6px;color:#262626;font-weight:400;transform:scaleX(0.8);transform-origin:right center;-webkit-text-stroke:0.05px #262626;">2,208,998,997</div>
<div class="t" style="left:145.69999999999993px;width:600px;text-align:right;top:315.58px;font-size:8.6px;color:#262626;font-weight:400;transform:scaleX(0.8);transform-origin:right center;-webkit-text-stroke:0.05px #262626;">1,617,426,694</div>
<div class="t" style="left:247.29999999999995px;width:600px;text-align:right;top:315.58px;font-size:8.6px;color:#262626;font-weight:400;transform:scaleX(0.8);transform-origin:right center;-webkit-text-stroke:0.05px #262626;">4,779,336,595</div>
<div class="t" style="left:347.79999999999995px;width:600px;text-align:right;top:315.58px;font-size:8.6px;color:#262626;font-weight:400;transform:scaleX(0.8);transform-origin:right center;-webkit-text-stroke:0.05px #262626;">2,622,291,573</div>
<div class="t" style="left:430.29999999999995px;width:600px;text-align:right;top:315.58px;font-size:8.6px;color:#262626;font-weight:400;transform:scaleX(0.8);transform-origin:right center;-webkit-text-stroke:0.05px #262626;">531,822,504</div>
<div class="t" style="left:204.85000000000002px;width:600px;text-align:center;top:326.46px;font-size:8.6px;color:#262626;font-weight:400;transform:scaleX(0.95);transform-origin:center center;-webkit-text-stroke:0.05px #262626;">2025</div>
<div class="t" style="left:241.39999999999998px;width:600px;text-align:center;top:326.46px;font-size:8.6px;color:#262626;font-weight:400;transform:scaleX(0.93);transform-origin:center center;-webkit-text-stroke:0.05px #262626;">Aug</div>
<div class="t" style="left:13.799999999999955px;width:600px;text-align:right;top:326.46px;font-size:8.6px;color:#262626;font-weight:400;transform:scaleX(0.8);transform-origin:right center;-webkit-text-stroke:0.05px #262626;">6,523,956,708</div>
<div class="t" style="left:75.0px;width:600px;text-align:right;top:326.46px;font-size:8.6px;color:#262626;font-weight:400;transform:scaleX(0.8);transform-origin:right center;-webkit-text-stroke:0.05px #262626;">2,163,499,761</div>
<div class="t" style="left:145.69999999999993px;width:600px;text-align:right;top:326.46px;font-size:8.6px;color:#262626;font-weight:400;transform:scaleX(0.8);transform-origin:right center;-webkit-text-stroke:0.05px #262626;">1,919,523,175</div>
<div class="t" style="left:247.29999999999995px;width:600px;text-align:right;top:326.46px;font-size:8.6px;color:#262626;font-weight:400;transform:scaleX(0.8);transform-origin:right center;-webkit-text-stroke:0.05px #262626;">6,104,096,418</div>
<div class="t" style="left:347.79999999999995px;width:600px;text-align:right;top:326.46px;font-size:8.6px;color:#262626;font-weight:400;transform:scaleX(0.8);transform-origin:right center;-webkit-text-stroke:0.05px #262626;">2,308,294,235</div>
<div class="t" style="left:430.29999999999995px;width:600px;text-align:right;top:326.46px;font-size:8.6px;color:#262626;font-weight:400;transform:scaleX(0.8);transform-origin:right center;-webkit-text-stroke:0.05px #262626;">879,332,180</div>
<div class="t" style="left:204.85000000000002px;width:600px;text-align:center;top:337.34px;font-size:8.6px;color:#262626;font-weight:400;transform:scaleX(0.95);transform-origin:center center;-webkit-text-stroke:0.05px #262626;">2025</div>
<div class="t" style="left:241.39999999999998px;width:600px;text-align:center;top:337.34px;font-size:8.6px;color:#262626;font-weight:400;transform:scaleX(0.93);transform-origin:center center;-webkit-text-stroke:0.05px #262626;">Sep</div>
<div class="t" style="left:13.799999999999955px;width:600px;text-align:right;top:337.34px;font-size:8.6px;color:#262626;font-weight:400;transform:scaleX(0.8);transform-origin:right center;-webkit-text-stroke:0.05px #262626;">7,011,022,932</div>
<div class="t" style="left:75.0px;width:600px;text-align:right;top:337.34px;font-size:8.6px;color:#262626;font-weight:400;transform:scaleX(0.8);transform-origin:right center;-webkit-text-stroke:0.05px #262626;">2,309,039,660</div>
<div class="t" style="left:145.69999999999993px;width:600px;text-align:right;top:337.34px;font-size:8.6px;color:#262626;font-weight:400;transform:scaleX(0.8);transform-origin:right center;-webkit-text-stroke:0.05px #262626;">1,500,869,202</div>
<div class="t" style="left:247.29999999999995px;width:600px;text-align:right;top:337.34px;font-size:8.6px;color:#262626;font-weight:400;transform:scaleX(0.8);transform-origin:right center;-webkit-text-stroke:0.05px #262626;">6,141,011,291</div>
<div class="t" style="left:347.79999999999995px;width:600px;text-align:right;top:337.34px;font-size:8.6px;color:#262626;font-weight:400;transform:scaleX(0.8);transform-origin:right center;-webkit-text-stroke:0.05px #262626;">2,544,132,959</div>
<div class="t" style="left:430.29999999999995px;width:600px;text-align:right;top:337.34px;font-size:8.6px;color:#262626;font-weight:400;transform:scaleX(0.8);transform-origin:right center;-webkit-text-stroke:0.05px #262626;">711,631,285</div>
<div class="t" style="left:204.85000000000002px;width:600px;text-align:center;top:348.22px;font-size:8.6px;color:#262626;font-weight:400;transform:scaleX(0.95);transform-origin:center center;-webkit-text-stroke:0.05px #262626;">2025</div>
<div class="t" style="left:241.39999999999998px;width:600px;text-align:center;top:348.22px;font-size:8.6px;color:#262626;font-weight:400;transform:scaleX(0.93);transform-origin:center center;-webkit-text-stroke:0.05px #262626;">Oct</div>
<div class="t" style="left:13.799999999999955px;width:600px;text-align:right;top:348.22px;font-size:8.6px;color:#262626;font-weight:400;transform:scaleX(0.8);transform-origin:right center;-webkit-text-stroke:0.05px #262626;">8,521,953,167</div>
<div class="t" style="left:75.0px;width:600px;text-align:right;top:348.22px;font-size:8.6px;color:#262626;font-weight:400;transform:scaleX(0.8);transform-origin:right center;-webkit-text-stroke:0.05px #262626;">2,153,140,405</div>
<div class="t" style="left:145.69999999999993px;width:600px;text-align:right;top:348.22px;font-size:8.6px;color:#262626;font-weight:400;transform:scaleX(0.8);transform-origin:right center;-webkit-text-stroke:0.05px #262626;">2,223,757,911</div>
<div class="t" style="left:247.29999999999995px;width:600px;text-align:right;top:348.22px;font-size:8.6px;color:#262626;font-weight:400;transform:scaleX(0.8);transform-origin:right center;-webkit-text-stroke:0.05px #262626;">7,245,119,268</div>
<div class="t" style="left:347.79999999999995px;width:600px;text-align:right;top:348.22px;font-size:8.6px;color:#262626;font-weight:400;transform:scaleX(0.8);transform-origin:right center;-webkit-text-stroke:0.05px #262626;">1,817,072,975</div>
<div class="t" style="left:430.29999999999995px;width:600px;text-align:right;top:348.22px;font-size:8.6px;color:#262626;font-weight:400;transform:scaleX(0.8);transform-origin:right center;-webkit-text-stroke:0.05px #262626;">818,129,076</div>
<div class="t" style="left:204.85000000000002px;width:600px;text-align:center;top:359.10px;font-size:8.6px;color:#262626;font-weight:400;transform:scaleX(0.95);transform-origin:center center;-webkit-text-stroke:0.05px #262626;">2025</div>
<div class="t" style="left:241.39999999999998px;width:600px;text-align:center;top:359.10px;font-size:8.6px;color:#262626;font-weight:400;transform:scaleX(0.93);transform-origin:center center;-webkit-text-stroke:0.05px #262626;">Nov</div>
<div class="t" style="left:13.799999999999955px;width:600px;text-align:right;top:359.10px;font-size:8.6px;color:#262626;font-weight:400;transform:scaleX(0.8);transform-origin:right center;-webkit-text-stroke:0.05px #262626;">9,948,130,145</div>
<div class="t" style="left:75.0px;width:600px;text-align:right;top:359.10px;font-size:8.6px;color:#262626;font-weight:400;transform:scaleX(0.8);transform-origin:right center;-webkit-text-stroke:0.05px #262626;">2,350,034,036</div>
<div class="t" style="left:145.69999999999993px;width:600px;text-align:right;top:359.10px;font-size:8.6px;color:#262626;font-weight:400;transform:scaleX(0.8);transform-origin:right center;-webkit-text-stroke:0.05px #262626;">1,886,827,164</div>
<div class="t" style="left:247.29999999999995px;width:600px;text-align:right;top:359.10px;font-size:8.6px;color:#262626;font-weight:400;transform:scaleX(0.8);transform-origin:right center;-webkit-text-stroke:0.05px #262626;">5,130,618,003</div>
<div class="t" style="left:347.79999999999995px;width:600px;text-align:right;top:359.10px;font-size:8.6px;color:#262626;font-weight:400;transform:scaleX(0.8);transform-origin:right center;-webkit-text-stroke:0.05px #262626;">2,796,761,174</div>
<div class="t" style="left:430.29999999999995px;width:600px;text-align:right;top:359.10px;font-size:8.6px;color:#262626;font-weight:400;transform:scaleX(0.8);transform-origin:right center;-webkit-text-stroke:0.05px #262626;">339,674,538</div>
<div class="t" style="left:204.85000000000002px;width:600px;text-align:center;top:369.98px;font-size:8.6px;color:#262626;font-weight:400;transform:scaleX(0.95);transform-origin:center center;-webkit-text-stroke:0.05px #262626;">2025</div>
<div class="t" style="left:241.39999999999998px;width:600px;text-align:center;top:369.98px;font-size:8.6px;color:#262626;font-weight:400;transform:scaleX(0.93);transform-origin:center center;-webkit-text-stroke:0.05px #262626;">Dec</div>
<div class="t" style="left:13.799999999999955px;width:600px;text-align:right;top:369.98px;font-size:8.6px;color:#262626;font-weight:400;transform:scaleX(0.8);transform-origin:right center;-webkit-text-stroke:0.05px #262626;">9,317,008,155</div>
<div class="t" style="left:75.0px;width:600px;text-align:right;top:369.98px;font-size:8.6px;color:#262626;font-weight:400;transform:scaleX(0.8);transform-origin:right center;-webkit-text-stroke:0.05px #262626;">2,066,435,940</div>
<div class="t" style="left:145.69999999999993px;width:600px;text-align:right;top:369.98px;font-size:8.6px;color:#262626;font-weight:400;transform:scaleX(0.8);transform-origin:right center;-webkit-text-stroke:0.05px #262626;">1,777,335,514</div>
<div class="t" style="left:247.29999999999995px;width:600px;text-align:right;top:369.98px;font-size:8.6px;color:#262626;font-weight:400;transform:scaleX(0.8);transform-origin:right center;-webkit-text-stroke:0.05px #262626;">7,673,838,123</div>
<div class="t" style="left:347.79999999999995px;width:600px;text-align:right;top:369.98px;font-size:8.6px;color:#262626;font-weight:400;transform:scaleX(0.8);transform-origin:right center;-webkit-text-stroke:0.05px #262626;">2,047,490,872</div>
<div class="t" style="left:430.29999999999995px;width:600px;text-align:right;top:369.98px;font-size:8.6px;color:#262626;font-weight:400;transform:scaleX(0.8);transform-origin:right center;-webkit-text-stroke:0.05px #262626;">439,971,192</div>
<div class="a" style="left:490px;top:113px;width:30px;height:277.7px;border:1.4px solid #FF0000;"></div>
<div class="a" style="left:525px;top:113px;width:30.899999999999977px;height:277.7px;border:1.4px solid #FF0000;"></div>
<div class="a" style="left:561.2px;top:113px;width:57.39999999999998px;height:277.7px;border:1.4px solid #FF0000;"></div>
<svg style="left:481.8px;top:7.4px" width="7.30" height="7.10" viewBox="0 0 7.3 7.1" preserveAspectRatio="none"><path d="M0.5,0.5 H6.8 V6.6 H0.5 Z" fill="none" stroke="#fff" stroke-width="1"/><rect x="0.5" y="2.6" width="6.3" height="0.9" fill="#fff"/><rect x="1.6" y="4.6" width="4.1" height="2" fill="#fff"/><rect x="3" y="5.3" width="0.9" height="1.3" fill="#217346"/></svg>
<svg style="left:496.2px;top:7.2px" width="7.30" height="7.40" viewBox="0 0 11.5 10.5" preserveAspectRatio="none"><path d="M1.5,3.3 H6.5 C9,3.3 10.5,5 10.5,6.8 C10.5,8.6 9,10 6.8,10" fill="none" stroke="#fff" stroke-width="1.5"/><path d="M4.3,0.5 L1.2,3.3 L4.3,6.1" fill="none" stroke="#fff" stroke-width="1.5"/></svg>
<svg style="left:505.79999999999995px;top:9.6px;" width="3.2" height="1.6" viewBox="0 0 3.2 1.6"><polygon points="0,0 3.2,0 1.6,1.6" fill="#fff"/></svg>
<svg style="left:513.3px;top:7.2px" width="7.20" height="7.40" viewBox="0 0 11.3 10.1" preserveAspectRatio="none"><path d="M9.8,3.1 H4.8 C2.3,3.1 0.8,4.8 0.8,6.6 C0.8,8.4 2.3,9.7 4.5,9.7" fill="none" stroke="#5E9C7B" stroke-width="1.5"/><path d="M7,0.4 L10.1,3.1 L7,5.8" fill="none" stroke="#5E9C7B" stroke-width="1.5"/></svg>
<svg style="left:522.8px;top:9.6px;" width="3.2" height="1.6" viewBox="0 0 3.2 1.6"><polygon points="0,0 3.2,0 1.6,1.6" fill="#5E9C7B"/></svg>
<svg style="left:530.2px;top:8.1px" width="8.10" height="6.10" viewBox="0 0 12.4 9.4" preserveAspectRatio="none"><path d="M0,1.7 H3 L3.8,0 H8.6 L9.4,1.7 H12.4 V9.4 H0 Z" fill="#fff"/><circle cx="5.9" cy="5.3" r="2.5" fill="none" stroke="#217346" stroke-width="0.9"/><circle cx="1.6" cy="3.2" r="0.45" fill="#217346"/></svg>
<svg style="left:544.2px;top:7.2px" width="6.30" height="7.60" viewBox="0 0 9.4 10.8" preserveAspectRatio="none"><rect x="0" y="0" width="1.4" height="10.8" fill="#fff" opacity="0.8"/><rect x="1.9" y="0.4" width="4.5" height="1.6" rx="0.6" fill="none" stroke="#fff" stroke-width="0.7" opacity="0.8"/><rect x="2" y="3.4" width="7.4" height="2.4" fill="#fff"/><path d="M7.5,9.1 H2.8 M4.5,7.6 L2.8,9.1 L4.5,10.6" fill="none" stroke="#fff" stroke-width="1"/></svg>
<svg style="left:553.3px;top:9.6px;" width="3.2" height="1.6" viewBox="0 0 3.2 1.6"><polygon points="0,0 3.2,0 1.6,1.6" fill="#fff"/></svg>
<svg style="left:562px;top:7.4px" width="7.70" height="7.40" viewBox="0 0 11.1 10.6" preserveAspectRatio="none"><rect x="0.7" y="0.7" width="6.3" height="6.3" fill="#EEEEEE" stroke="#fff" stroke-width="1.4"/><path d="M8.2,3.8 H10.4 V9.9 H4.2 V7.9" fill="none" stroke="#C9DCCF" stroke-width="1.1"/></svg>
<svg style="left:576.8px;top:7.4px" width="7.40" height="7.40" viewBox="0 0 11.8 10.8" preserveAspectRatio="none"><rect x="0" y="0" width="8" height="7.7" fill="#fff"/><rect x="1.3" y="1.3" width="5" height="5" fill="#F3F3F3"/><rect x="4.6" y="3.9" width="6.6" height="6.3" rx="1" fill="#217346" stroke="#C9DCCF" stroke-width="1.1"/></svg>
<svg style="left:586.4px;top:9.6px;" width="3.2" height="1.6" viewBox="0 0 3.2 1.6"><polygon points="0,0 3.2,0 1.6,1.6" fill="#fff"/></svg>
<svg style="left:595.5px;top:8.5px" width="3.20" height="4.50" viewBox="0 0 4 4.3" preserveAspectRatio="none"><rect x="0" y="0" width="4" height="0.9" fill="#fff"/><polygon points="0,1.9 4,1.9 2,4.3" fill="#fff"/></svg>
<div class="t" style="left:772.2px;top:1.40px;font-size:8px;color:#C9DECF;font-weight:400;transform:scaleX(0.7164);transform-origin:left center;-webkit-text-stroke:0.109px #C9DECF;">Income Statement  -  Excel</div>
<div class="a" style="left:1020px;top:5.5px;width:13px;height:9.6px;background:#B8D6C3;"></div>
<div class="t" style="left:1022.5px;top:1.30px;font-size:7.5px;color:#217346;font-weight:400;transform:scaleX(0.5669);transform-origin:left center;-webkit-text-stroke:0.102px #217346;">Sign in</div>
<div class="a" style="left:501.2px;top:19.2px;width:28.6px;height:14.8px;background:#F3F3F3;"></div>
<div class="t" style="left:480.1px;top:17.30px;font-size:7.4px;color:#F2F2F2;font-weight:400;transform:scaleX(0.78);transform-origin:left center;-webkit-text-stroke:0.2px #F2F2F2;">File</div>
<div class="t" style="left:506.7px;top:17.30px;font-size:7.4px;color:#217346;font-weight:400;transform:scaleX(0.8157);transform-origin:left center;-webkit-text-stroke:0.2px #217346;">Home</div>
<div class="t" style="left:536.4px;top:17.30px;font-size:7.4px;color:#F2F2F2;font-weight:400;transform:scaleX(0.7511);transform-origin:left center;-webkit-text-stroke:0.2px #F2F2F2;">Insert</div>
<div class="t" style="left:563.8px;top:17.30px;font-size:7.4px;color:#F2F2F2;font-weight:400;transform:scaleX(0.7725);transform-origin:left center;-webkit-text-stroke:0.2px #F2F2F2;">Page Layout</div>
<div class="t" style="left:609.5px;top:17.30px;font-size:7.4px;color:#F2F2F2;font-weight:400;transform:scaleX(0.7653);transform-origin:left center;-webkit-text-stroke:0.2px #F2F2F2;">Formulas</div>
<div class="t" style="left:646.6px;top:17.30px;font-size:7.4px;color:#F2F2F2;font-weight:400;transform:scaleX(0.7613);transform-origin:left center;-webkit-text-stroke:0.2px #F2F2F2;">Data</div>
<div class="t" style="left:672.2px;top:17.30px;font-size:7.4px;color:#F2F2F2;font-weight:400;transform:scaleX(0.7419);transform-origin:left center;-webkit-text-stroke:0.2px #F2F2F2;">Review</div>
<div class="t" style="left:703.2px;top:17.30px;font-size:7.4px;color:#F2F2F2;font-weight:400;transform:scaleX(0.8048);transform-origin:left center;-webkit-text-stroke:0.2px #F2F2F2;">View</div>
<div class="t" style="left:729.3px;top:17.30px;font-size:7.4px;color:#F2F2F2;font-weight:400;transform:scaleX(0.7738);transform-origin:left center;-webkit-text-stroke:0.2px #F2F2F2;">Developer</div>
<div class="t" style="left:768.5px;top:17.30px;font-size:7.4px;color:#F2F2F2;font-weight:400;transform:scaleX(0.7933);transform-origin:left center;-webkit-text-stroke:0.2px #F2F2F2;">i-MATRIX</div>
<div class="t" style="left:806.9px;top:17.30px;font-size:7.4px;color:#F2F2F2;font-weight:400;transform:scaleX(0.8082);transform-origin:left center;-webkit-text-stroke:0.2px #F2F2F2;">Help</div>
<div class="t" style="left:841.5px;top:17.30px;font-size:7.4px;color:#F2F2F2;font-weight:400;transform:scaleX(0.8159);transform-origin:left center;-webkit-text-stroke:0.2px #F2F2F2;">Tell me what you want to do</div>
<svg style="left:832.3px;top:21.8px" width="6.80" height="9.20" viewBox="0 0 7 9.5" preserveAspectRatio="none"><path d="M3.5,0.6 C5.5,0.6 6.4,2 6.4,3.4 C6.4,5 5,5.6 4.8,7 H2.2 C2,5.6 0.6,5 0.6,3.4 C0.6,2 1.5,0.6 3.5,0.6 Z M2.3,8.4 H4.7" fill="none" stroke="#fff" stroke-width="0.9"/></svg>
<svg style="left:477.4px;top:38.3px" width="15.10" height="15.20" viewBox="0 0 24 25" preserveAspectRatio="none"><rect x="0.4" y="2.6" width="18.3" height="19.1" rx="1.2" fill="#F0C77C"/><path d="M4.2,5.4 L5.2,2.8 H7.6 C7.6,0.2 11.8,0.2 11.8,2.8 H14.2 L15.2,5.4 Z" fill="#707070"/><circle cx="9.7" cy="2.5" r="0.9" fill="#F0C77C"/><path d="M11.6,9.1 H19.4 L22.6,12.3 V23.8 H11.6 Z" fill="#fff" stroke="#7A7A7A" stroke-width="1.1"/><path d="M19.2,9.1 V12.5 H22.6" fill="none" stroke="#7A7A7A" stroke-width="1"/></svg>
<div class="t" style="left:477.1px;top:48.60px;font-size:6.8px;color:#262626;font-weight:400;transform:scaleX(0.6844);transform-origin:left center;-webkit-text-stroke:0.093px #262626;">Paste</div>
<svg style="left:481.7px;top:65.2px;" width="3.2" height="1.6" viewBox="0 0 3.2 1.6"><polygon points="0,0 3.2,0 1.6,1.6" fill="#555"/></svg>
<svg style="left:495.5px;top:37.8px" width="7.50" height="7.20" viewBox="0 0 12 11.5" preserveAspectRatio="none"><path d="M2.5,0.5 L8.5,7.5 M9.5,0.5 L3.5,7.5" stroke="#444" stroke-width="1.3"/><circle cx="2.8" cy="8.8" r="2" fill="none" stroke="#3C7FC4" stroke-width="1.2"/><circle cx="9.2" cy="8.8" r="2" fill="none" stroke="#3C7FC4" stroke-width="1.2"/></svg>
<div class="t" style="left:504.0px;top:32.40px;font-size:7px;color:#262626;font-weight:400;transform:scaleX(0.8079);transform-origin:left center;-webkit-text-stroke:0.095px #262626;">Cut</div>
<svg style="left:495px;top:49px" width="8.50" height="7.00" viewBox="0 0 13 11" preserveAspectRatio="none"><path d="M0.6,0.6 H5.5 L7,2 V8 H0.6 Z" fill="#fff" stroke="#666" stroke-width="1"/><path d="M5.2,3.2 H10.3 L12.3,5.2 V10.4 H5.2 Z" fill="#fff" stroke="#666" stroke-width="1"/><rect x="2" y="3" width="2.5" height="1" fill="#3C7FC4"/><rect x="2" y="5" width="2.5" height="1" fill="#3C7FC4"/><rect x="7" y="6.5" width="3.5" height="1" fill="#3C7FC4"/><rect x="7" y="8.2" width="3.5" height="1" fill="#3C7FC4"/></svg>
<div class="t" style="left:504.0px;top:43.60px;font-size:7px;color:#262626;font-weight:400;transform:scaleX(0.8262);transform-origin:left center;-webkit-text-stroke:0.095px #262626;">Copy</div>
<svg style="left:523.1999999999999px;top:52.2px;" width="3.2" height="1.6" viewBox="0 0 3.2 1.6"><polygon points="0,0 3.2,0 1.6,1.6" fill="#555"/></svg>
<svg style="left:495.5px;top:60px" width="8.00" height="7.50" viewBox="0 0 12.5 11.5" preserveAspectRatio="none"><path d="M0.5,7.5 L5,3.5 L9,7.5 L5,11 Z" fill="#EBC17F"/><path d="M5.5,3.8 L9.5,0.5 L12,3 L8.8,7" fill="#555"/><path d="M4.5,4.3 L8.6,8.1" stroke="#fff" stroke-width="0.8"/></svg>
<div class="t" style="left:504.0px;top:55.00px;font-size:7px;color:#262626;font-weight:400;transform:scaleX(0.8317);transform-origin:left center;-webkit-text-stroke:0.095px #262626;">Format Painter</div>
<div class="t" style="left:493.1px;top:66.30px;font-size:7px;color:#444444;font-weight:400;transform:scaleX(0.8144);transform-origin:left center;-webkit-text-stroke:0.095px #444444;">Clipboard</div>
<svg style="left:542.3499999999999px;top:73.85px" width="4.23" height="4.23" viewBox="0 0 6.5 6.5" preserveAspectRatio="none"><path d="M0.5,5.5 V0.5 H5.5" fill="none" stroke="#999" stroke-width="0.9"/><path d="M2,2 L5.8,5.8 M3,5.8 H5.8 V3" fill="none" stroke="#777" stroke-width="0.9"/></svg>
<div class="a" style="left:548.5px;top:35.7px;width:0.8px;height:41.8px;background:#D5D5D5;"></div>
<div class="a" style="left:551.3px;top:39.7px;width:75.5px;height:10.8px;background:#fff;border:0.8px solid #C6C6C6;"></div>
<div class="a" style="left:626.2px;top:39.7px;width:22px;height:10.8px;background:#fff;border:0.8px solid #C6C6C6;"></div>
<div class="t" style="left:552.1px;top:36.10px;font-size:6.8px;color:#333;font-weight:400;transform:scaleX(0.8382);transform-origin:left center;-webkit-text-stroke:0.093px #333;">Pretendard</div>
<svg style="left:621.45px;top:44.175px;" width="3.3" height="1.65" viewBox="0 0 3.3 1.65"><polygon points="0,0 3.3,0 1.65,1.65" fill="#444"/></svg>
<div class="t" style="left:628.6px;top:36.10px;font-size:7px;color:#333;font-weight:400;transform:scaleX(0.6744);transform-origin:left center;-webkit-text-stroke:0.095px #333;">11</div>
<svg style="left:642.65px;top:44.175px;" width="3.3" height="1.65" viewBox="0 0 3.3 1.65"><polygon points="0,0 3.3,0 1.65,1.65" fill="#444"/></svg>
<svg style="left:651px;top:41.5px" width="7.00" height="7.00" viewBox="0 0 11 10" preserveAspectRatio="none"><text x="0" y="9.5" font-family="Liberation Sans" font-size="11.5" fill="#505050">A</text><polygon points="6.3,2.6 10.3,2.6 8.3,0.3" fill="#3C7FC4"/></svg>
<svg style="left:662.5px;top:41.2px" width="7.00" height="7.30" viewBox="0 0 11 10.5" preserveAspectRatio="none"><text x="0.3" y="10" font-family="Liberation Sans" font-size="9.5" fill="#505050">A</text><polygon points="6.5,0.5 10.5,0.5 8.5,2.8" fill="#3C7FC4"/></svg>
<div class="a" style="left:551px;top:54.7px;width:10.8px;height:11.4px;background:#C6C6C6;"></div>
<svg style="left:554px;top:57px" width="4.80" height="5.60" viewBox="0 0 7 8" preserveAspectRatio="none"><text x="0" y="7.5" font-family="Liberation Sans" font-size="10.2" font-weight="700" fill="#444">B</text></svg>
<svg style="left:565px;top:57px" width="4.40" height="5.60" viewBox="0 0 6 8" preserveAspectRatio="none"><text x="0" y="7.5" font-family="Liberation Serif" font-size="10.5" font-style="italic" fill="#444">I</text></svg>
<svg style="left:576px;top:56.8px" width="5.50" height="7.00" viewBox="0 0 8 10" preserveAspectRatio="none"><text x="0" y="7.5" font-family="Liberation Sans" font-size="10.2" fill="#444">U</text><rect x="0.2" y="8.7" width="7.2" height="1" fill="#444"/></svg>
<svg style="left:584.65px;top:59.474999999999994px;" width="3.3" height="1.65" viewBox="0 0 3.3 1.65"><polygon points="0,0 3.3,0 1.65,1.65" fill="#555"/></svg>
<div class="a" style="left:591.4px;top:55.8px;width:0.8px;height:9.8px;background:#D0D0D0;"></div>
<svg style="left:596px;top:57px" width="6.50" height="6.30" viewBox="0 0 10 9.5" preserveAspectRatio="none"><rect x="0.5" y="0.5" width="9" height="8.5" fill="none" stroke="#BDBDBD" stroke-width="1"/><path d="M5,0.5 V9 M0.5,4.75 H9.5" stroke="#BDBDBD" stroke-width="1"/></svg>
<svg style="left:605.75px;top:59.474999999999994px;" width="3.3" height="1.65" viewBox="0 0 3.3 1.65"><polygon points="0,0 3.3,0 1.65,1.65" fill="#555"/></svg>
<div class="a" style="left:612.9px;top:55.8px;width:0.8px;height:9.8px;background:#D0D0D0;"></div>
<svg style="left:616.6px;top:56px" width="8.70" height="8.60" viewBox="0 0 13.5 13" preserveAspectRatio="none"><path d="M1.1,5.8 L6.8,2.1 L10.5,5 L5.6,8.6 Z" fill="#fff" stroke="#555" stroke-width="1"/><path d="M3.4,4.3 C3,1 6.6,0.2 7.4,3" fill="none" stroke="#555" stroke-width="0.9"/><path d="M10.2,3.2 C12.2,3.6 12.6,5.6 11.6,7.2" fill="none" stroke="#3C7FC4" stroke-width="1.6"/><rect x="-0.5" y="9.5" width="13" height="3.2" fill="#FFFF00"/></svg>
<svg style="left:627.15px;top:59.474999999999994px;" width="3.3" height="1.65" viewBox="0 0 3.3 1.65"><polygon points="0,0 3.3,0 1.65,1.65" fill="#555"/></svg>
<svg style="left:633px;top:56.3px" width="8.50" height="8.20" viewBox="0 0 13 12.5" preserveAspectRatio="none"><text x="2.6" y="8.6" font-family="Liberation Sans" font-size="10" fill="#3A3A3A" stroke="#3A3A3A" stroke-width="0.2">A</text><rect x="-0.3" y="9.2" width="13" height="3.2" fill="#FF0000"/></svg>
<svg style="left:644.0500000000001px;top:59.474999999999994px;" width="3.3" height="1.65" viewBox="0 0 3.3 1.65"><polygon points="0,0 3.3,0 1.65,1.65" fill="#555"/></svg>
<div class="a" style="left:651.1px;top:55.5px;width:0.8px;height:10px;background:#D0D0D0;"></div>
<svg style="left:655px;top:56px" width="7.80" height="8.50" viewBox="0 0 12 13" preserveAspectRatio="none"><text x="0" y="5.3" font-family="Liberation Sans" font-size="6.6" fill="#444" letter-spacing="-0.3">abc</text><text x="3.6" y="12.7" font-family="Liberation Sans" font-size="9.2" font-weight="700" font-style="italic" fill="#3C7FC4">A</text></svg>
<svg style="left:665.25px;top:59.474999999999994px;" width="3.3" height="1.65" viewBox="0 0 3.3 1.65"><polygon points="0,0 3.3,0 1.65,1.65" fill="#555"/></svg>
<div class="t" style="left:599.9px;top:66.40px;font-size:7px;color:#444444;font-weight:400;transform:scaleX(0.8497);transform-origin:left center;-webkit-text-stroke:0.095px #444444;">Font</div>
<svg style="left:666.25px;top:73.95px" width="4.23" height="4.23" viewBox="0 0 6.5 6.5" preserveAspectRatio="none"><path d="M0.5,5.5 V0.5 H5.5" fill="none" stroke="#999" stroke-width="0.9"/><path d="M2,2 L5.8,5.8 M3,5.8 H5.8 V3" fill="none" stroke="#777" stroke-width="0.9"/></svg>
<div class="a" style="left:672.2px;top:35.7px;width:0.8px;height:41.8px;background:#D5D5D5;"></div>
<svg style="left:676.3px;top:41.7px" width="6.90" height="3.80" viewBox="0 0 11 6" preserveAspectRatio="none"><path d="M0,0.65 H11 M0,3 H11 M0,5.35 H11" stroke="#777" stroke-width="1.1"/></svg>
<div class="a" style="left:685.2px;top:39.7px;width:10.9px;height:10.9px;background:#C6C6C6;"></div>
<svg style="left:687px;top:43.2px" width="7.20" height="4.00" viewBox="0 0 11 6" preserveAspectRatio="none"><path d="M0,0.65 H11 M0,3 H11 M0,5.35 H11" stroke="#666" stroke-width="1.1"/></svg>
<svg style="left:697.9px;top:45px" width="7.30" height="4.30" viewBox="0 0 11 6" preserveAspectRatio="none"><path d="M0,0.65 H11 M0,3 H11 M0,5.35 H11" stroke="#777" stroke-width="1.1"/></svg>
<div class="a" style="left:709px;top:40px;width:0.8px;height:10.4px;background:#D0D0D0;"></div>
<svg style="left:713.1px;top:40.8px" width="8.90" height="8.10" viewBox="0 0 14.5 13" preserveAspectRatio="none"><text x="4.3" y="7.6" text-anchor="middle" font-family="Liberation Sans" font-size="9" fill="#505050" transform="rotate(-45 4.3 4.6)">ab</text><path d="M6.2,12.2 L12.8,5.4" stroke="#505050" stroke-width="1"/><polygon points="11,4.4 13.7,3.9 13.2,6.6" fill="#505050"/></svg>
<svg style="left:722.35px;top:44.175px;" width="3.3" height="1.65" viewBox="0 0 3.3 1.65"><polygon points="0,0 3.3,0 1.65,1.65" fill="#555"/></svg>
<svg style="left:676.3px;top:57.2px" width="6.90" height="5.80" viewBox="0 0 11 8.5" preserveAspectRatio="none"><path d="M0,0.65 H11 M0,3.1 H7 M0,5.6 H11 M0,8.1 H7" stroke="#777" stroke-width="1.1"/></svg>
<div class="a" style="left:685.2px;top:55.3px;width:10.9px;height:10.6px;background:#C6C6C6;"></div>
<svg style="left:687px;top:57.6px" width="7.20" height="5.80" viewBox="0 0 11 8.5" preserveAspectRatio="none"><path d="M0,0.65 H11 M2,3.1 H9 M0,5.6 H11 M2,8.1 H9" stroke="#666" stroke-width="1.1"/></svg>
<svg style="left:697.9px;top:57.2px" width="7.30" height="5.80" viewBox="0 0 11 8.5" preserveAspectRatio="none"><path d="M0,0.65 H11 M3.5,3.1 H11 M0,5.6 H11 M3.5,8.1 H11" stroke="#777" stroke-width="1.1"/></svg>
<div class="a" style="left:709px;top:55.3px;width:0.8px;height:10.6px;background:#D0D0D0;"></div>
<svg style="left:713.1px;top:56.5px" width="7.90" height="7.00" viewBox="0 0 12.5 10.5" preserveAspectRatio="none"><path d="M0,0.6 H12.5 M0,9.9 H12.5" stroke="#808080" stroke-width="1"/><path d="M6,3.7 H12.5 M6,6.8 H12.5" stroke="#A0A0A0" stroke-width="1"/><path d="M5,5.2 H1 M3.1,3.1 L1,5.2 L3.1,7.3" fill="none" stroke="#3C7FC4" stroke-width="1.4"/></svg>
<svg style="left:724px;top:56.5px" width="8.00" height="7.00" viewBox="0 0 13 10.5" preserveAspectRatio="none"><path d="M0,0.6 H13 M0,9.9 H13" stroke="#808080" stroke-width="1"/><path d="M6.5,3.7 H13 M6.5,6.8 H13" stroke="#A0A0A0" stroke-width="1"/><path d="M0.2,5.2 H4.4 M2.3,3.1 L4.4,5.2 L2.3,7.3" fill="none" stroke="#3C7FC4" stroke-width="1.4"/></svg>
<div class="a" style="left:735.6px;top:39px;width:0.8px;height:26.6px;background:#D5D5D5;"></div>
<svg style="left:739.7px;top:41.5px" width="6.80" height="7.00" viewBox="0 0 11 12" preserveAspectRatio="none"><text x="0" y="5.5" font-family="Liberation Sans" font-size="7" fill="#555">ab</text><text x="0" y="11.5" font-family="Liberation Sans" font-size="7" fill="#555">c</text><path d="M5,9.5 L6.5,11 L9.5,8" fill="none" stroke="#3C7FC4" stroke-width="1"/></svg>
<div class="t" style="left:748.2px;top:36.30px;font-size:7.2px;color:#262626;font-weight:400;transform:scaleX(0.7964);transform-origin:left center;-webkit-text-stroke:0.098px #262626;">Wrap Text</div>
<svg style="left:739.2px;top:55.8px" width="7.80" height="8.20" viewBox="0 0 13 12.8" preserveAspectRatio="none"><rect x="0.6" y="0.6" width="11.8" height="11.6" fill="#fff" stroke="#666" stroke-width="1.1"/><path d="M0.6,3.6 H12.4 M0.6,9.2 H12.4 M4.3,0.6 V3.6 M8.7,0.6 V3.6 M4.3,9.2 V12.2 M8.7,9.2 V12.2" stroke="#777" stroke-width="0.9"/><path d="M2.5,6.4 H10.5" stroke="#3C7FC4" stroke-width="1.1"/></svg>
<div class="t" style="left:748.2px;top:51.60px;font-size:7.2px;color:#262626;font-weight:400;transform:scaleX(0.8206);transform-origin:left center;-webkit-text-stroke:0.098px #262626;">Merge &amp; Center</div>
<svg style="left:795.0500000000001px;top:60.175px;" width="3.3" height="1.65" viewBox="0 0 3.3 1.65"><polygon points="0,0 3.3,0 1.65,1.65" fill="#555"/></svg>
<div class="t" style="left:719.9px;top:66.40px;font-size:7px;color:#444444;font-weight:400;transform:scaleX(0.8289);transform-origin:left center;-webkit-text-stroke:0.095px #444444;">Alignment</div>
<svg style="left:796.4499999999999px;top:74.05px" width="4.23" height="4.23" viewBox="0 0 6.5 6.5" preserveAspectRatio="none"><path d="M0.5,5.5 V0.5 H5.5" fill="none" stroke="#999" stroke-width="0.9"/><path d="M2,2 L5.8,5.8 M3,5.8 H5.8 V3" fill="none" stroke="#777" stroke-width="0.9"/></svg>
<div class="a" style="left:802.2px;top:36px;width:0.8px;height:42px;background:#D5D5D5;"></div>
<div class="a" style="left:804.9px;top:39.4px;width:64.8px;height:11.1px;background:#fff;border:0.8px solid #C6C6C6;"></div>
<div class="t" style="left:806.0px;top:36.30px;font-size:7px;color:#333;font-weight:400;transform:scaleX(0.7831);transform-origin:left center;-webkit-text-stroke:0.095px #333;">General</div>
<svg style="left:863.95px;top:44.474999999999994px;" width="3.3" height="1.65" viewBox="0 0 3.3 1.65"><polygon points="0,0 3.3,0 1.65,1.65" fill="#444"/></svg>
<svg style="left:805.8px;top:55.8px" width="8.80" height="8.80" viewBox="0 0 9 9" preserveAspectRatio="none"><rect x="0.5" y="0.5" width="8" height="5" fill="#3C7FC4"/><path d="M2,3 H7" stroke="#fff" stroke-width="1"/><circle cx="4.5" cy="7.5" r="1.5" fill="#EBA84F"/><circle cx="7" cy="7.5" r="1.5" fill="#EBA84F"/></svg>
<svg style="left:816.65px;top:59.474999999999994px;" width="3.3" height="1.65" viewBox="0 0 3.3 1.65"><polygon points="0,0 3.3,0 1.65,1.65" fill="#555"/></svg>
<div class="t" style="left:823.5px;top:51.10px;font-size:8.2px;color:#555;font-weight:400;transform:scaleX(0.9189);transform-origin:left center;-webkit-text-stroke:0.112px #555;">%</div>
<div class="t" style="left:835.9px;top:48.00px;font-size:9px;color:#444;font-weight:700;transform:scaleX(1.0399);transform-origin:left center;">,</div>
<div class="a" style="left:845.5px;top:56px;width:0.8px;height:10px;background:#D0D0D0;"></div>
<svg style="left:848.8px;top:55.8px" width="8.20" height="8.80" viewBox="0 0 8 9" preserveAspectRatio="none"><path d="M0.5,2.5 H3 M1.75,1.2 V3.8" stroke="#3C7FC4" stroke-width="0.9"/><text x="3.5" y="4.5" font-family="Liberation Sans" font-size="4.5" fill="#666">0</text><text x="1" y="8.8" font-family="Liberation Sans" font-size="4.5" fill="#666">.00</text><path d="M0.5,7 L2,6 V8 Z" fill="#3C7FC4"/></svg>
<svg style="left:860.2px;top:55.8px" width="8.30" height="8.80" viewBox="0 0 8 9" preserveAspectRatio="none"><text x="2" y="4.5" font-family="Liberation Sans" font-size="4.5" fill="#666">.00</text><text x="4" y="8.8" font-family="Liberation Sans" font-size="4.5" fill="#666">0</text><path d="M0.5,7 L2.5,6 V8 Z" fill="#3C7FC4"/></svg>
<div class="t" style="left:822.8px;top:66.80px;font-size:7px;color:#444444;font-weight:400;transform:scaleX(0.8114);transform-origin:left center;-webkit-text-stroke:0.095px #444444;">Number</div>
<svg style="left:865.05px;top:74.05px" width="4.23" height="4.23" viewBox="0 0 6.5 6.5" preserveAspectRatio="none"><path d="M0.5,5.5 V0.5 H5.5" fill="none" stroke="#999" stroke-width="0.9"/><path d="M2,2 L5.8,5.8 M3,5.8 H5.8 V3" fill="none" stroke="#777" stroke-width="0.9"/></svg>
<div class="a" style="left:871.3px;top:36px;width:0.8px;height:42px;background:#D5D5D5;"></div>
<svg style="left:884.7px;top:37.9px" width="15.30" height="15.20" viewBox="0 0 15 15" preserveAspectRatio="none"><rect x="0.5" y="0.5" width="11" height="12" fill="#fff" stroke="#999" stroke-width="0.8"/><path d="M0.5,3.5 H11.5 M0.5,6.5 H11.5 M0.5,9.5 H11.5 M4,0.5 V12.5" stroke="#BBB" stroke-width="0.6"/><rect x="4.3" y="0.9" width="3" height="2.3" fill="#E8553E"/><rect x="4.3" y="3.9" width="6" height="2.3" fill="#3C7FC4"/><rect x="4.3" y="6.9" width="4" height="2.3" fill="#E8553E"/><rect x="4.3" y="9.9" width="2" height="2.3" fill="#3C7FC4"/><rect x="8" y="9" width="6.5" height="5.5" fill="#fff" stroke="#666" stroke-width="0.8"/><path d="M9.5,13 L13,10" stroke="#444" stroke-width="0.7"/></svg>
<div class="t" style="left:876.0px;top:49.10px;font-size:7px;color:#262626;font-weight:400;transform:scaleX(0.868);transform-origin:left center;-webkit-text-stroke:0.095px #262626;">Conditional</div>
<div class="t" style="left:874.4px;top:56.70px;font-size:7px;color:#262626;font-weight:400;transform:scaleX(0.9088);transform-origin:left center;-webkit-text-stroke:0.095px #262626;">Formatting</div>
<svg style="left:906.0px;top:65.45px;" width="3" height="1.5" viewBox="0 0 3 1.5"><polygon points="0,0 3,0 1.5,1.5" fill="#555"/></svg>
<svg style="left:916.7px;top:37.9px" width="14.60" height="14.60" viewBox="0 0 15 15" preserveAspectRatio="none"><rect x="0.5" y="0.5" width="12" height="11" fill="#fff" stroke="#999" stroke-width="0.8"/><rect x="3.5" y="3" width="8.5" height="8" fill="#A9C7EA"/><path d="M0.5,3 H12.5 M0.5,5.7 H12.5 M0.5,8.4 H12.5 M3.5,0.5 V11.5 M6.5,0.5 V11.5 M9.5,0.5 V11.5" stroke="#999" stroke-width="0.5"/><path d="M6,14.5 L9,10 L11,12 Z" fill="#3C7FC4"/><path d="M10,11 L14.5,5.5" stroke="#555" stroke-width="1.6"/></svg>
<div class="t" style="left:910.2px;top:49.10px;font-size:7px;color:#262626;font-weight:400;transform:scaleX(0.8031);transform-origin:left center;-webkit-text-stroke:0.095px #262626;">Format as</div>
<div class="t" style="left:914.5px;top:56.70px;font-size:7px;color:#262626;font-weight:400;transform:scaleX(0.8008);transform-origin:left center;-webkit-text-stroke:0.095px #262626;">Table</div>
<svg style="left:930.0px;top:65.45px;" width="3" height="1.5" viewBox="0 0 3 1.5"><polygon points="0,0 3,0 1.5,1.5" fill="#555"/></svg>
<svg style="left:941.1px;top:37.9px" width="14.70" height="14.60" viewBox="0 0 15 15" preserveAspectRatio="none"><rect x="0.5" y="0.5" width="12" height="11" fill="#fff" stroke="#999" stroke-width="0.8"/><rect x="3" y="3" width="8" height="6" fill="#A9C7EA"/><path d="M0.5,3 H12.5 M0.5,9 H12.5 M3,0.5 V11.5" stroke="#999" stroke-width="0.5"/><path d="M6,14.5 L9,10 L11,12 Z" fill="#3C7FC4"/><path d="M10,11 L14.5,5.5" stroke="#555" stroke-width="1.6"/></svg>
<div class="t" style="left:942.5px;top:49.10px;font-size:7px;color:#262626;font-weight:400;transform:scaleX(0.8293);transform-origin:left center;-webkit-text-stroke:0.095px #262626;">Cell</div>
<div class="t" style="left:938.5px;top:56.70px;font-size:7px;color:#262626;font-weight:400;transform:scaleX(0.7659);transform-origin:left center;-webkit-text-stroke:0.095px #262626;">Styles</div>
<svg style="left:955.1px;top:65.45px;" width="3" height="1.5" viewBox="0 0 3 1.5"><polygon points="0,0 3,0 1.5,1.5" fill="#555"/></svg>
<div class="t" style="left:908.6px;top:66.70px;font-size:7px;color:#444444;font-weight:400;transform:scaleX(0.7397);transform-origin:left center;-webkit-text-stroke:0.095px #444444;">Styles</div>
<div class="a" style="left:961.6px;top:36px;width:0.8px;height:42px;background:#D5D5D5;"></div>
<svg style="left:967px;top:37.9px" width="13.50" height="13.80" viewBox="0 0 13.5 14" preserveAspectRatio="none"><rect x="0.5" y="0.5" width="7" height="3" fill="#fff" stroke="#777" stroke-width="0.8"/><rect x="0.5" y="9" width="7" height="4.5" fill="#fff" stroke="#777" stroke-width="0.8"/><path d="M0.5,11.25 H7.5 M4,9 V13.5" stroke="#777" stroke-width="0.6"/><rect x="6.5" y="5" width="6.5" height="2.5" fill="#fff" stroke="#3C7FC4" stroke-width="0.8"/><path d="M1,6.25 H5 M2.5,4.8 L1,6.25 L2.5,7.7" fill="none" stroke="#3C7FC4" stroke-width="0.9"/></svg>
<div class="t" style="left:965.6px;top:49.00px;font-size:7px;color:#262626;font-weight:400;transform:scaleX(0.8455);transform-origin:left center;-webkit-text-stroke:0.095px #262626;">Insert</div>
<svg style="left:971.6px;top:64.85px;" width="3" height="1.5" viewBox="0 0 3 1.5"><polygon points="0,0 3,0 1.5,1.5" fill="#555"/></svg>
<svg style="left:986.8px;top:37.9px" width="15.50" height="13.80" viewBox="0 0 15.5 14" preserveAspectRatio="none"><rect x="0.5" y="0.5" width="7" height="3" fill="#fff" stroke="#777" stroke-width="0.8"/><rect x="0.5" y="9" width="7" height="4.5" fill="#fff" stroke="#777" stroke-width="0.8"/><path d="M0.5,11.25 H7.5 M4,9 V13.5" stroke="#777" stroke-width="0.6"/><rect x="2" y="5" width="6" height="2.5" fill="#fff" stroke="#3C7FC4" stroke-width="0.8"/><path d="M9,3 L15,9.5 M15,3 L9,9.5" stroke="#E8553E" stroke-width="1.3"/></svg>
<div class="t" style="left:985.5px;top:49.00px;font-size:7px;color:#262626;font-weight:400;transform:scaleX(0.8254);transform-origin:left center;-webkit-text-stroke:0.095px #262626;">Delete</div>
<svg style="left:992.7px;top:64.85px;" width="3" height="1.5" viewBox="0 0 3 1.5"><polygon points="0,0 3,0 1.5,1.5" fill="#555"/></svg>
<svg style="left:1007.6px;top:37.5px" width="12.50" height="14.20" viewBox="0 0 12.5 14" preserveAspectRatio="none"><path d="M0.5,1.2 H12 M0.5,0 V2.4 M12,0 V2.4" stroke="#3C7FC4" stroke-width="0.8"/><rect x="0.5" y="3" width="11.5" height="10.5" fill="#fff" stroke="#888" stroke-width="0.8"/><path d="M0.5,6 H12 M0.5,10 H12 M4,3 V13.5 M8.5,3 V13.5" stroke="#999" stroke-width="0.6"/><rect x="4.2" y="6.2" width="4.1" height="3.6" fill="#3C7FC4"/></svg>
<div class="t" style="left:1005.3px;top:49.00px;font-size:7px;color:#262626;font-weight:400;transform:scaleX(0.8571);transform-origin:left center;-webkit-text-stroke:0.095px #262626;">Format</div>
<svg style="left:1013.5px;top:64.85px;" width="3" height="1.5" viewBox="0 0 3 1.5"><polygon points="0,0 3,0 1.5,1.5" fill="#555"/></svg>
<div class="t" style="left:988.7px;top:66.50px;font-size:7px;color:#444444;font-weight:400;transform:scaleX(0.7134);transform-origin:left center;-webkit-text-stroke:0.095px #444444;">Cells</div>
<div class="a" style="left:1028.7px;top:36px;width:0.8px;height:42px;background:#D5D5D5;"></div>
<div class="a" style="left:1030.5px;top:37px;width:2.5px;height:13px;background:#C8C8C8;"></div>
<div class="t" style="left:476.5px;top:82.50px;font-size:7px;color:#333;font-weight:400;transform:scaleX(0.876);transform-origin:left center;-webkit-text-stroke:0.095px #333;">A1</div>
<svg style="left:561.35px;top:90.725px;" width="3.5" height="1.75" viewBox="0 0 3.5 1.75"><polygon points="0,0 3.5,0 1.75,1.75" fill="#555"/></svg>
<div class="a" style="left:575.3px;top:88.8px;width:1px;height:1px;background:#999;"></div>
<div class="a" style="left:575.3px;top:91.3px;width:1px;height:1px;background:#999;"></div>
<div class="a" style="left:575.3px;top:93.8px;width:1px;height:1px;background:#999;"></div>
<svg style="left:589.8px;top:89px" width="5.50" height="5.00" viewBox="0 0 9 7.8" preserveAspectRatio="none"><path d="M0.5,0.4 L8.5,7.4 M8.5,0.4 L0.5,7.4" stroke="#A6A6A6" stroke-width="1.4"/></svg>
<svg style="left:607.6px;top:89px" width="6.00" height="5.00" viewBox="0 0 10.2 8.2" preserveAspectRatio="none"><path d="M0.5,4.6 L3.6,7.6 L9.7,0.5" fill="none" stroke="#A6A6A6" stroke-width="1.5"/></svg>
<svg style="left:624.8px;top:88.5px" width="6.00" height="6.00" viewBox="0 0 9.4 9.4" preserveAspectRatio="none"><path d="M7.2,0.9 C6.3,0.2 5.2,0.4 4.8,1.6 L3.4,7.6 C3,9 2.2,9.2 1.2,8.6 M2.8,3.6 H5.6" fill="none" stroke="#505050" stroke-width="1.05"/><path d="M5.4,5 L8.8,8.8 M8.8,5 L5.4,8.8" stroke="#505050" stroke-width="1"/></svg>
<div class="t" style="left:644.4px;top:82.50px;font-size:7.2px;color:#333;font-weight:400;transform:scaleX(0.928);transform-origin:left center;-webkit-text-stroke:0.098px #333;">Year</div>
<div class="a" style="left:464px;top:3px;width:8px;height:415px;background:linear-gradient(to right, rgba(0,0,0,0), rgba(0,0,0,0.07) 60%, rgba(0,0,0,0.25));"></div>
<svg style="left:0;top:0" width="1042" height="433"><line x1="225" y1="272.3" x2="282" y2="272.3" stroke="#FF0000" stroke-width="1.2" stroke-dasharray="3,2.6"/><polygon points="276,268.8 288,272.3 276,275.8 279,272.3" fill="#FF0000"/><line x1="395" y1="272" x2="486" y2="272" stroke="#FF0000" stroke-width="1.2" stroke-dasharray="3,2.6"/><polygon points="479,268.5 491,272 479,275.5 482,272" fill="#FF0000"/></svg>
<div class="a" style="left:26.4px;top:399.3px;width:110px;height:21px;background:#F0F0F0;border:1px solid #8C8C8C;border-bottom:none;border-radius:8px 8px 0 0"></div>
<div class="t" style="left:34.8px;top:399.10px;font-size:12.2px;color:#111;font-weight:400;transform:scaleX(1.0234);transform-origin:left center;-webkit-text-stroke:0.15px #111;">V_ProfitAndLoss</div>
<div class="a" style="left:486.2px;top:399px;width:40.5px;height:21px;background:#F0F0F0;border:1px solid #8C8C8C;border-bottom:none;border-radius:7px 7px 0 0"></div>
<div class="t" style="left:498.1px;top:399.40px;font-size:12.2px;color:#111;font-weight:400;transform:scaleX(0.917);transform-origin:left center;-webkit-text-stroke:0.15px #111;">D1</div>
<div class="a" style="left:0px;top:418px;width:1042px;height:15px;background:#000;"></div>
<div class="a" style="left:1033px;top:0px;width:9px;height:433px;background:#000;"></div>
</body></html>
